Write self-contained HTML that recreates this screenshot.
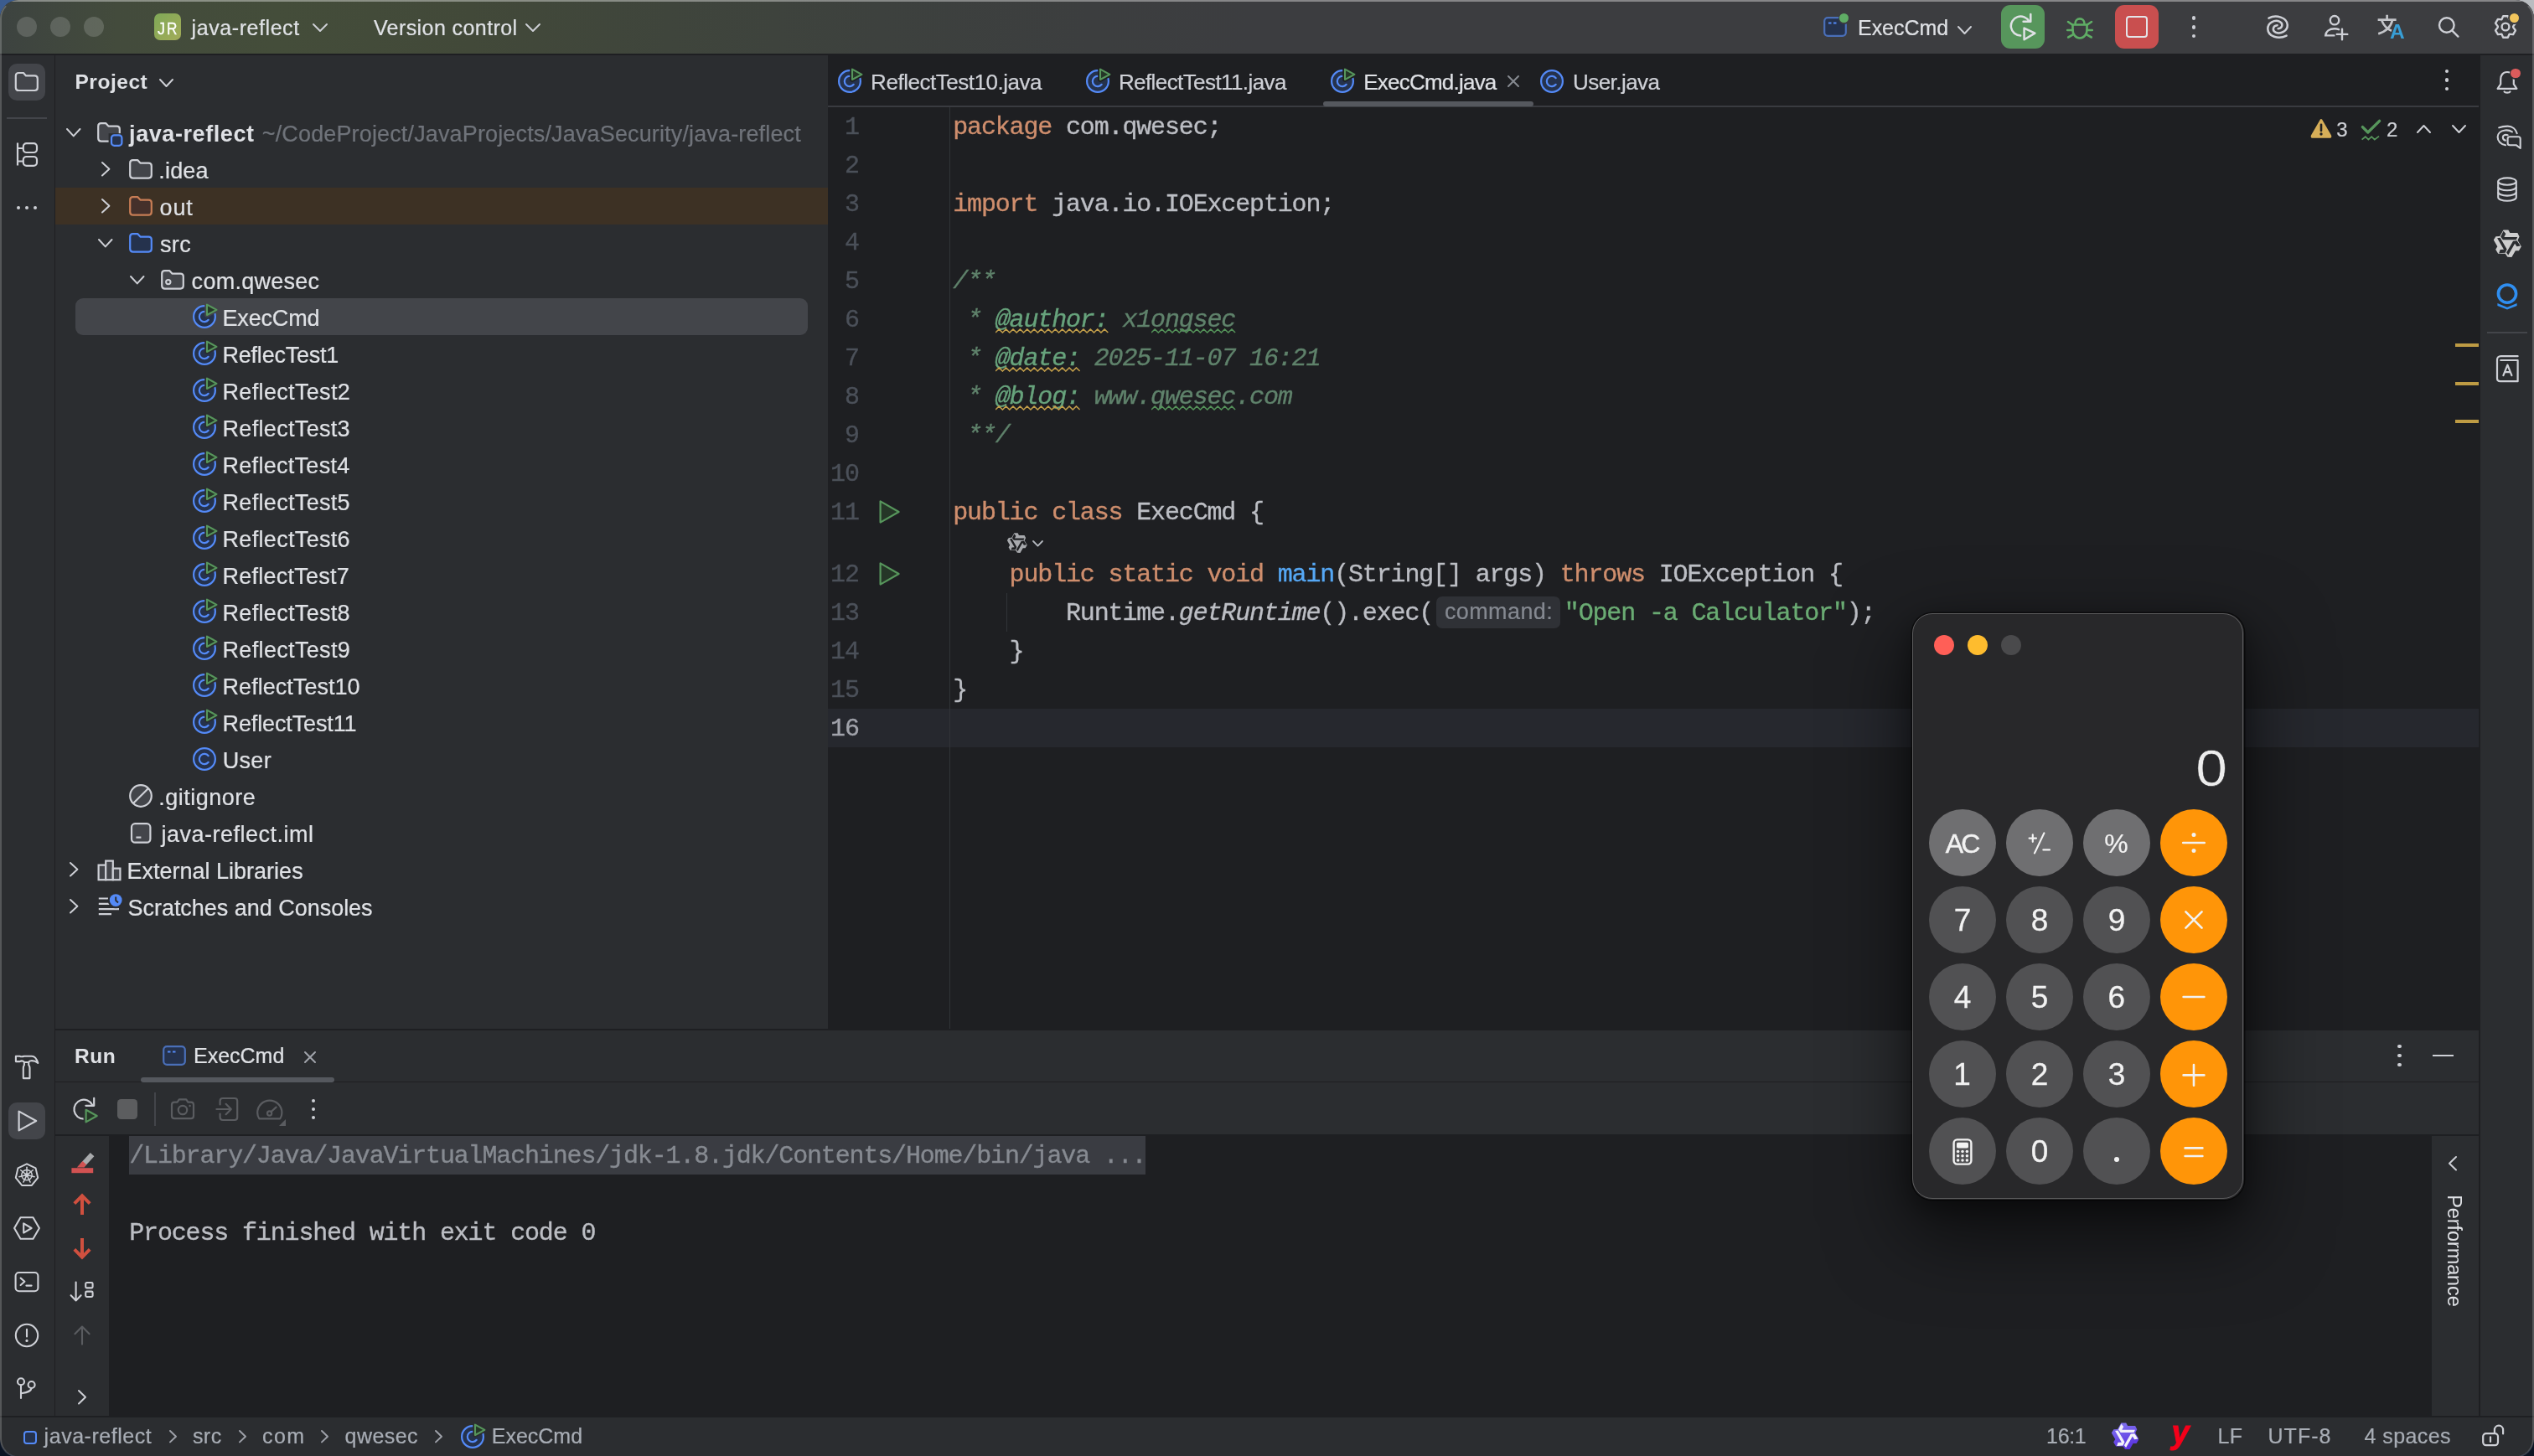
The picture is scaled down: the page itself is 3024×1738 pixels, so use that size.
<!DOCTYPE html>
<html><head><meta charset="utf-8"><title>java-reflect - ExecCmd.java</title>
<style>
html,body{margin:0;padding:0;}
body{width:3024px;height:1738px;overflow:hidden;position:relative;background:#1E1F22;font-family:"Liberation Sans",sans-serif;}
#w div,#w svg,#w span.a{position:absolute;}
#w{will-change:transform;position:absolute;left:0;top:0;width:3024px;height:1738px;overflow:hidden;}
</style></head><body><div id="w">
<div style="left:0px;top:0px;width:60px;height:60px;background:#3b5c8f;"></div>
<div style="left:2964px;top:0px;width:60px;height:60px;background:#b9bcc0;"></div>
<div style="left:0px;top:1678px;width:60px;height:60px;background:#0b1424;"></div>
<div style="left:2964px;top:1678px;width:60px;height:60px;background:#0b1322;"></div>
<div style="left:0;top:0;width:3024px;height:1738px;border-radius:22px;background:#1E1F22;overflow:hidden;" id="win">
<div style="left:0;top:0;width:3024px;height:64px;background:linear-gradient(90deg,#3d4340 0px,#434b3c 140px,#444d3a 330px,#424939 560px,#3f453c 800px,#3d413e 1050px,#3c3e3f 1300px,#3c3d40 1500px,#3c3d40 3024px);"></div>
<div style="left:0px;top:0px;width:3024px;height:2px;background:rgba(255,255,255,0.38);"></div>
<div style="left:0px;top:64px;width:3024px;height:2px;background:#1E1F22;"></div>
<div style="left:0px;top:66px;width:65px;height:1624px;background:#2B2D30;"></div>
<div style="left:66px;top:66px;width:922px;height:1162px;background:#2B2D30;"></div>
<div style="left:2960px;top:66px;width:64px;height:1624px;background:#2B2D30;"></div>
<div style="left:66px;top:1230px;width:2892px;height:61px;background:#2B2D30;"></div>
<div style="left:66px;top:1292px;width:2892px;height:62px;background:#2B2D30;"></div>
<div style="left:66px;top:1355px;width:64px;height:335px;background:#2B2D30;"></div>
<div style="left:2902px;top:1356px;width:56px;height:334px;background:#2B2D30;"></div>
<div style="left:0px;top:1692px;width:3024px;height:46px;background:#2B2D30;"></div>
<div style="left:20px;top:20px;width:24px;height:24px;background:rgba(255,255,255,0.16);border-radius:12px;"></div>
<div style="left:60px;top:20px;width:24px;height:24px;background:rgba(255,255,255,0.16);border-radius:12px;"></div>
<div style="left:100px;top:20px;width:24px;height:24px;background:rgba(255,255,255,0.16);border-radius:12px;"></div>
<div style="left:184px;top:16px;width:32px;height:32px;border-radius:7px;background:linear-gradient(135deg,#7fa857 0%,#a3ac58 100%);"></div>
<div style="left:188.30px;top:21.20px;font-family:'Liberation Sans', sans-serif;font-size:20px;line-height:26px;color:#FFFFFF;white-space:pre;-webkit-text-stroke:0.3px #fff;transform:scaleX(0.9);transform-origin:left center;">J</div>
<div style="left:198.60px;top:21.20px;font-family:'Liberation Sans', sans-serif;font-size:20px;line-height:26px;color:#FFFFFF;white-space:pre;-webkit-text-stroke:0.3px #fff;transform:scaleX(0.86);transform-origin:left center;">R</div>
<div style="left:228.62px;top:16.80px;font-family:'Liberation Sans', sans-serif;font-size:25px;line-height:33px;color:#DFE1E5;white-space:pre;letter-spacing:0.568px;-webkit-text-stroke:0.22px #DFE1E5;">java-reflect</div>
<div style="left:445.88px;top:16.80px;font-family:'Liberation Sans', sans-serif;font-size:25px;line-height:33px;color:#DFE1E5;white-space:pre;letter-spacing:0.420px;-webkit-text-stroke:0.22px #DFE1E5;">Version control</div>
<svg style="left:371.5px;top:26.5px;" width="20" height="12" viewBox="0 0 20 12" fill="none"><path d="M2 2 L10.0 10 L18 2" stroke="#CED0D6" stroke-width="2" stroke-linecap="round" stroke-linejoin="round"/></svg>
<svg style="left:626.0px;top:26.5px;" width="20" height="12" viewBox="0 0 20 12" fill="none"><path d="M2 2 L10.0 10 L18 2" stroke="#CED0D6" stroke-width="2" stroke-linecap="round" stroke-linejoin="round"/></svg>
<svg style="left:2176px;top:20px;" width="28" height="24" viewBox="0 0 28 24" fill="none"><rect x="1.2" y="1.2" width="25.6" height="21.6" rx="4" fill="#25324D" stroke="#4A6FB8" stroke-width="2.2"/><path d="M6 7.5 H9.5 M12 7.5 H15.5" stroke="#548AF7" stroke-width="2"/></svg>
<div style="left:2193.5px;top:14.7px;width:14px;height:14px;background:#3c3d40;border-radius:7px;"></div>
<div style="left:2195px;top:16.2px;width:11px;height:11px;background:#5FAD65;border-radius:5.5px;"></div>
<div style="left:2217.00px;top:17.10px;font-family:'Liberation Sans', sans-serif;font-size:25px;line-height:33px;color:#DFE1E5;white-space:pre;letter-spacing:-0.046px;-webkit-text-stroke:0.22px #DFE1E5;">ExecCmd</div>
<svg style="left:2334.9px;top:30.299999999999997px;" width="19" height="12" viewBox="0 0 19 12" fill="none"><path d="M2 2 L9.5 10 L17 2" stroke="#CED0D6" stroke-width="2" stroke-linecap="round" stroke-linejoin="round"/></svg>
<div style="left:2388px;top:6px;width:52px;height:52px;background:#57965C;border-radius:11px;"></div>
<svg style="left:2398px;top:14px;" width="36" height="36" viewBox="0 0 36 36" fill="none"><path d="M13.4 28.5 A11.5 11.5 0 1 1 23.5 11.6" stroke="#DFE1E5" stroke-width="2.5" stroke-linecap="round"/><path d="M16.6 11.7 H25.3 V2.9" stroke="#DFE1E5" stroke-width="2.5" stroke-linecap="round" stroke-linejoin="round"/><path d="M17.6 19.6 V33.2 L30.4 25.6 Z" stroke="#57965C" stroke-width="6" stroke-linejoin="round" fill="#57965C"/><path d="M17.6 19.6 V33.2 L30.4 25.6 Z" stroke="#DFE1E5" stroke-width="2.5" stroke-linejoin="round" fill="#57965C"/></svg>
<svg style="left:2464px;top:14px;" width="36" height="36" viewBox="0 0 36 36" fill="none"><g stroke="#5FAD65" stroke-width="2.6" stroke-linecap="round" fill="none"><path d="M9.5 15.5 H26.5 V22 A8.5 9.5 0 0 1 9.5 22 Z" stroke-linejoin="round"/><path d="M12.6 13.8 A5.4 5.4 0 0 1 23.4 13.8"/><path d="M4 12 L9 15.5 M32 12 L27 15.5 M3.2 22 H9.5 M32.8 22 H26.5 M4.2 30.5 L10.2 27.2 M31.8 30.5 L25.8 27.2"/></g></svg>
<div style="left:2524px;top:6px;width:52px;height:52px;background:#C94F4F;border-radius:11px;"></div>
<div style="left:2536.5px;top:18.8px;width:22px;height:22px;border:2.6px solid #E4E5E9;border-radius:4px;"></div>
<div style="left:2615.6px;top:19.400000000000002px;width:4.8px;height:4.8px;background:#CED0D6;border-radius:2.4px;"></div>
<div style="left:2615.6px;top:30.0px;width:4.8px;height:4.8px;background:#CED0D6;border-radius:2.4px;"></div>
<div style="left:2615.6px;top:40.6px;width:4.8px;height:4.8px;background:#CED0D6;border-radius:2.4px;"></div>
<svg style="left:2702px;top:16px;" width="32" height="32" viewBox="0 0 32 32" fill="none"><g stroke="#CED0D6" stroke-width="2.5" stroke-linecap="round" fill="none"><path d="M5.5 5.6 C14 1.2 27.5 4.6 27.8 13.8 C28 21 19.5 25.4 13.6 22.6 C9.2 20.4 10.2 14.6 15.6 14.2"/><path d="M26.6 26.6 C17 31.4 4.6 27.6 4.3 18.6 C4 11.2 12.6 7 18.6 9.8 C23 12 22 17.8 16.6 18.2"/></g></svg>
<svg style="left:2770px;top:14px;" width="36" height="36" viewBox="0 0 36 36" fill="none"><g stroke="#CED0D6" stroke-width="2.4" stroke-linecap="round" fill="none"><circle cx="16" cy="10.2" r="5.2"/><path d="M15.4 28.4 H5.2 C5.6 23.4 10 20.3 16 20.3 C17.8 20.3 19.6 20.6 21 21.2"/><path d="M25 20.6 V33.2 M18.7 26.9 H31.3"/></g></svg>
<svg style="left:2834px;top:14px;" width="40" height="36" viewBox="0 0 40 36" fill="none"><g stroke="#C3C5C9" stroke-width="2.7" fill="none"><path d="M3.6 9.6 H25.6 M14.6 3.8 V9.6 M21 10 C19.4 17.6 13 23.6 4.2 26.4 M8.4 10.6 C10.6 16.6 15 20.6 20 22.8"/></g></svg>
<div style="left:2851.99px;top:21.90px;font-family:'Liberation Sans', sans-serif;font-size:24.5px;line-height:32px;color:#389FD6;white-space:pre;font-weight:700;">A</div>
<svg style="left:2906px;top:16px;" width="32" height="32" viewBox="0 0 32 32" fill="none"><g stroke="#CED0D6" stroke-width="2.4" stroke-linecap="round" fill="none"><circle cx="13.8" cy="14" r="8.8"/><path d="M20.4 20.6 L27.4 27.6"/></g></svg>
<svg style="left:2974px;top:16px;" width="32" height="32" viewBox="0 0 32 32" fill="none"><g stroke="#CED0D6" stroke-width="2.4" stroke-linejoin="round" fill="none"><path d="M13.2 3.2 H18.8 L20.6 7.4 L25.1 6.9 L27.9 11.7 L25.2 15.4 V16.6 L27.9 20.3 L25.1 25.1 L20.6 24.6 L18.8 28.8 H13.2 L11.4 24.6 L6.9 25.1 L4.1 20.3 L6.8 16.6 V15.4 L4.1 11.7 L6.9 6.9 L11.4 7.4 Z"/><circle cx="16" cy="16" r="4.4"/></g></svg>
<div style="left:2993.2px;top:14.2px;width:14.4px;height:14.4px;background:#3c3d40;border-radius:7.2px;"></div>
<div style="left:2994.7px;top:15.7px;width:11.4px;height:11.4px;background:#F2C55C;border-radius:5.7px;"></div>
<div style="left:10px;top:76px;width:44px;height:44px;background:#43454A;border-radius:10px;"></div>
<svg style="left:16px;top:84px;" width="32" height="28" viewBox="0 0 32 28" fill="none"><path d="M6.3 3 H12.0 L15.0 6.4 H25.3 Q28.8 6.4 28.8 9.9 V20.5 Q28.8 24 25.3 24 H6.3 Q2.8 24 2.8 20.5 V6.5 Q2.8 3 6.3 3 Z" stroke="#CED0D6" stroke-width="2.2" stroke-linejoin="round"/></svg>
<div style="left:8px;top:140px;width:48px;height:2px;background:#43454A;"></div>
<svg style="left:16px;top:166px;" width="32" height="36" viewBox="0 0 32 36" fill="none"><g stroke="#CED0D6" stroke-width="2.2" fill="none"><path d="M5 4.5 V31.5 M5 11 H11.5 M5 26.5 H11.5"/><rect x="11.8" y="5.2" width="16.2" height="10.8" rx="3.8"/><rect x="11.8" y="21" width="16.2" height="10.8" rx="3.8"/></g></svg>
<div style="left:19.7px;top:245.7px;width:4.6px;height:4.6px;background:#CED0D6;border-radius:2.3px;"></div>
<div style="left:29.7px;top:245.7px;width:4.6px;height:4.6px;background:#CED0D6;border-radius:2.3px;"></div>
<div style="left:39.900000000000006px;top:245.7px;width:4.6px;height:4.6px;background:#CED0D6;border-radius:2.3px;"></div>
<svg style="left:16px;top:1258px;" width="32" height="32" viewBox="0 0 32 32" fill="none"><path d="M2.9 2.7 H7.6 Q9 3.4 10 3.3 Q11.5 3.2 12.9 2.7 H22 C25.5 2.7 28 6.5 29.3 10.9 C27 9 24 8 21.1 8.2 C19.8 8.3 18.8 8.9 18.2 9.8 V13.2 Q19.5 15 19.5 17.1 V29.1 H11.8 V17.1 Q11.8 15 12.9 13.2 V9.8 Q11.4 8.3 10 8.4 Q8.8 8.6 7.6 9.1 H2.9 Z M12.9 10 H18.2" stroke="#CED0D6" stroke-width="2.1" stroke-linejoin="round" fill="none"/></svg>
<div style="left:10px;top:1316px;width:44px;height:44px;background:#43454A;border-radius:10px;"></div>
<svg style="left:16px;top:1322px;" width="32" height="32" viewBox="0 0 32 32" fill="none"><path d="M6.6 4.6 V27.4 L27.2 16 Z" stroke="#CED0D6" stroke-width="2.2" stroke-linejoin="round"/></svg>
<svg style="left:16px;top:1386px;" width="32" height="32" viewBox="0 0 32 32" fill="none"><g stroke="#CED0D6" stroke-linejoin="round" fill="none"><polygon points="16.00,3.30 26.55,8.38 29.16,19.80 21.86,28.96 10.14,28.96 2.84,19.80 5.45,8.38" stroke-width="2"/><g stroke-width="1.5" stroke-linecap="round"><circle cx="16" cy="16.6" r="6.2"/><circle cx="16" cy="16.6" r="1.6"/><path d="M16 16.6 L16.00 7.20"/><path d="M16 16.6 L23.35 10.74"/><path d="M16 16.6 L25.16 18.69"/><path d="M16 16.6 L20.08 25.07"/><path d="M16 16.6 L11.92 25.07"/><path d="M16 16.6 L6.84 18.69"/><path d="M16 16.6 L8.65 10.74"/></g></g></svg>
<svg style="left:14px;top:1450px;" width="36" height="32" viewBox="0 0 36 32" fill="none"><g stroke="#CED0D6" stroke-width="2.1" stroke-linejoin="round" fill="none"><polygon points="3.1,16 10.5,3.3 25.5,3.3 32.9,16 25.5,28.7 10.5,28.7"/><path d="M14.2 10.4 V21.6 L23.6 16 Z"/></g></svg>
<svg style="left:16px;top:1514px;" width="32" height="32" viewBox="0 0 32 32" fill="none"><g stroke="#CED0D6" stroke-width="2.1" stroke-linejoin="round" stroke-linecap="round" fill="none"><rect x="2.6" y="5" width="26.8" height="22.2" rx="4"/><path d="M8.6 11.6 L13.4 15.8 L8.6 20 M15.4 20.6 H21.6"/></g></svg>
<svg style="left:16px;top:1578px;" width="32" height="32" viewBox="0 0 32 32" fill="none"><g stroke="#CED0D6" stroke-width="2.1" stroke-linecap="round" fill="none"><circle cx="16" cy="16" r="13.2"/><path d="M16 8.8 V17.4"/></g><circle cx="16" cy="22.4" r="1.6" fill="#CED0D6"/></svg>
<svg style="left:16px;top:1642px;" width="32" height="32" viewBox="0 0 32 32" fill="none"><g stroke="#CED0D6" stroke-width="2.1" stroke-linecap="round" fill="none"><circle cx="9" cy="7.2" r="4"/><circle cx="21.6" cy="11" r="4"/><path d="M9 11.4 V27 M21.4 15.2 C21 19.6 15 20.2 9.2 21.2"/></g></svg>
<div style="left:89.41px;top:81.60px;font-family:'Liberation Sans', sans-serif;font-size:24.5px;line-height:32px;color:#DFE1E5;white-space:pre;letter-spacing:0.551px;font-weight:700;">Project</div>
<svg style="left:188.5px;top:92.6px;" width="19" height="12" viewBox="0 0 19 12" fill="none"><path d="M2 2 L9.5 10 L17 2" stroke="#CED0D6" stroke-width="2" stroke-linecap="round" stroke-linejoin="round"/></svg>
<div style="left:66px;top:224px;width:922px;height:44px;background:#3D3124;"></div>
<div style="left:90px;top:356px;width:874px;height:44px;background:#43454A;border-radius:9px;"></div>
<svg style="left:78.25px;top:152.20000000000002px;" width="19.5" height="12.4" viewBox="0 0 19.5 12.4" fill="none"><path d="M2 2 L9.75 10.4 L17.5 2" stroke="#CED0D6" stroke-width="2" stroke-linecap="round" stroke-linejoin="round"/></svg>
<svg style="left:115px;top:144px;" width="34" height="32" viewBox="0 0 34 32" fill="none"><path d="M5.7 3.2 H11.399999999999999 L14.399999999999999 6.6 H24.3 Q27.8 6.6 27.8 10.100000000000001 V21.099999999999998 Q27.8 24.599999999999998 24.3 24.599999999999998 H5.7 Q2.2 24.599999999999998 2.2 21.099999999999998 V6.7 Q2.2 3.2 5.7 3.2 Z" stroke="#CED0D6" stroke-width="2.2" stroke-linejoin="round" fill="#43454A"/><rect x="14.6" y="15.2" width="19" height="16.8" fill="#2B2D30"/><rect x="18" y="17.4" width="12.4" height="12.4" rx="3.4" fill="#25324D" stroke="#548AF7" stroke-width="2.2"/></svg>
<div style="left:154.10px;top:141.80px;font-family:'Liberation Sans', sans-serif;font-size:27px;line-height:36px;color:#DFE1E5;white-space:pre;letter-spacing:0.573px;font-weight:700;">java-reflect</div>
<div style="left:312.79px;top:141.80px;font-family:'Liberation Sans', sans-serif;font-size:27px;line-height:36px;color:#6F737A;white-space:pre;letter-spacing:0.145px;-webkit-text-stroke:0.22px #6F737A;">~/CodeProject/JavaProjects/JavaSecurity/java-reflect</div>
<svg style="left:119.6px;top:192.25px;" width="12.4" height="19.5" viewBox="0 0 12.4 19.5" fill="none"><path d="M2 2 L10.4 9.75 L2 17.5" stroke="#CED0D6" stroke-width="2" stroke-linecap="round" stroke-linejoin="round"/></svg>
<svg style="left:153px;top:188px;" width="32" height="28" viewBox="0 0 32 28" fill="none"><path d="M5.7 3.2 H11.399999999999999 L14.399999999999999 6.6 H24.3 Q27.8 6.6 27.8 10.100000000000001 V21.099999999999998 Q27.8 24.599999999999998 24.3 24.599999999999998 H5.7 Q2.2 24.599999999999998 2.2 21.099999999999998 V6.7 Q2.2 3.2 5.7 3.2 Z" stroke="#CED0D6" stroke-width="2.2" stroke-linejoin="round" fill="#43454A"/></svg>
<div style="left:189.27px;top:185.80px;font-family:'Liberation Sans', sans-serif;font-size:27px;line-height:36px;color:#DFE1E5;white-space:pre;letter-spacing:0.185px;-webkit-text-stroke:0.22px #DFE1E5;">.idea</div>
<svg style="left:119.6px;top:236.25px;" width="12.4" height="19.5" viewBox="0 0 12.4 19.5" fill="none"><path d="M2 2 L10.4 9.75 L2 17.5" stroke="#CED0D6" stroke-width="2" stroke-linecap="round" stroke-linejoin="round"/></svg>
<svg style="left:153px;top:232px;" width="32" height="28" viewBox="0 0 32 28" fill="none"><path d="M5.7 3.2 H11.399999999999999 L14.399999999999999 6.6 H24.3 Q27.8 6.6 27.8 10.100000000000001 V21.099999999999998 Q27.8 24.599999999999998 24.3 24.599999999999998 H5.7 Q2.2 24.599999999999998 2.2 21.099999999999998 V6.7 Q2.2 3.2 5.7 3.2 Z" stroke="#C77D55" stroke-width="2.2" stroke-linejoin="round" fill="#45302B"/></svg>
<div style="left:190.62px;top:229.80px;font-family:'Liberation Sans', sans-serif;font-size:27px;line-height:36px;color:#DFE1E5;white-space:pre;letter-spacing:0.860px;-webkit-text-stroke:0.22px #DFE1E5;">out</div>
<svg style="left:116.25px;top:284.2px;" width="19.5" height="12.4" viewBox="0 0 19.5 12.4" fill="none"><path d="M2 2 L9.75 10.4 L17.5 2" stroke="#CED0D6" stroke-width="2" stroke-linecap="round" stroke-linejoin="round"/></svg>
<svg style="left:153px;top:276px;" width="32" height="28" viewBox="0 0 32 28" fill="none"><path d="M5.7 3.2 H11.399999999999999 L14.399999999999999 6.6 H24.3 Q27.8 6.6 27.8 10.100000000000001 V21.099999999999998 Q27.8 24.599999999999998 24.3 24.599999999999998 H5.7 Q2.2 24.599999999999998 2.2 21.099999999999998 V6.7 Q2.2 3.2 5.7 3.2 Z" stroke="#548AF7" stroke-width="2.2" stroke-linejoin="round" fill="#25324D"/></svg>
<div style="left:191.02px;top:273.80px;font-family:'Liberation Sans', sans-serif;font-size:27px;line-height:36px;color:#DFE1E5;white-space:pre;letter-spacing:0.352px;-webkit-text-stroke:0.22px #DFE1E5;">src</div>
<svg style="left:154.25px;top:328.2px;" width="19.5" height="12.4" viewBox="0 0 19.5 12.4" fill="none"><path d="M2 2 L9.75 10.4 L17.5 2" stroke="#CED0D6" stroke-width="2" stroke-linecap="round" stroke-linejoin="round"/></svg>
<svg style="left:191px;top:320px;" width="32" height="28" viewBox="0 0 32 28" fill="none"><path d="M5.7 3.2 H11.399999999999999 L14.399999999999999 6.6 H24.3 Q27.8 6.6 27.8 10.100000000000001 V21.099999999999998 Q27.8 24.599999999999998 24.3 24.599999999999998 H5.7 Q2.2 24.599999999999998 2.2 21.099999999999998 V6.7 Q2.2 3.2 5.7 3.2 Z" stroke="#CED0D6" stroke-width="2.2" stroke-linejoin="round" fill="#43454A"/><circle cx="9.8" cy="16.6" r="2.7" stroke="#CED0D6" stroke-width="2"/></svg>
<div style="left:228.62px;top:317.80px;font-family:'Liberation Sans', sans-serif;font-size:27px;line-height:36px;color:#DFE1E5;white-space:pre;letter-spacing:0.271px;-webkit-text-stroke:0.22px #DFE1E5;">com.qwesec</div>
<svg style="left:228.0px;top:360.0px;" width="36.0" height="36.0" viewBox="0 0 36 36" fill="none"><circle cx="16" cy="18" r="12.9" fill="#25324D" stroke="#548AF7" stroke-width="2.2"/><path d="M20.7 14.2 A6.1 6.1 0 1 0 20.7 21.8" stroke="#548AF7" stroke-width="2.2" stroke-linecap="round" fill="none"/><path d="M19 3.6 V16 L30.4 9.8 Z" stroke="#43454A" stroke-width="5.6" stroke-linejoin="round" fill="#43454A"/><path d="M19 3.6 V16 L30.4 9.8 Z" stroke="#57965C" stroke-width="2.1" stroke-linejoin="round" fill="#253627"/></svg>
<div style="left:265.54px;top:361.80px;font-family:'Liberation Sans', sans-serif;font-size:27px;line-height:36px;color:#DFE1E5;white-space:pre;letter-spacing:-0.177px;-webkit-text-stroke:0.22px #DFE1E5;">ExecCmd</div>
<svg style="left:228.0px;top:404.0px;" width="36.0" height="36.0" viewBox="0 0 36 36" fill="none"><circle cx="16" cy="18" r="12.9" fill="#25324D" stroke="#548AF7" stroke-width="2.2"/><path d="M20.7 14.2 A6.1 6.1 0 1 0 20.7 21.8" stroke="#548AF7" stroke-width="2.2" stroke-linecap="round" fill="none"/><path d="M19 3.6 V16 L30.4 9.8 Z" stroke="#2B2D30" stroke-width="5.6" stroke-linejoin="round" fill="#2B2D30"/><path d="M19 3.6 V16 L30.4 9.8 Z" stroke="#57965C" stroke-width="2.1" stroke-linejoin="round" fill="#253627"/></svg>
<div style="left:265.54px;top:405.80px;font-family:'Liberation Sans', sans-serif;font-size:27px;line-height:36px;color:#DFE1E5;white-space:pre;letter-spacing:-0.230px;-webkit-text-stroke:0.22px #DFE1E5;">ReflecTest1</div>
<svg style="left:228.0px;top:448.0px;" width="36.0" height="36.0" viewBox="0 0 36 36" fill="none"><circle cx="16" cy="18" r="12.9" fill="#25324D" stroke="#548AF7" stroke-width="2.2"/><path d="M20.7 14.2 A6.1 6.1 0 1 0 20.7 21.8" stroke="#548AF7" stroke-width="2.2" stroke-linecap="round" fill="none"/><path d="M19 3.6 V16 L30.4 9.8 Z" stroke="#2B2D30" stroke-width="5.6" stroke-linejoin="round" fill="#2B2D30"/><path d="M19 3.6 V16 L30.4 9.8 Z" stroke="#57965C" stroke-width="2.1" stroke-linejoin="round" fill="#253627"/></svg>
<div style="left:265.54px;top:449.80px;font-family:'Liberation Sans', sans-serif;font-size:27px;line-height:36px;color:#DFE1E5;white-space:pre;letter-spacing:0.334px;-webkit-text-stroke:0.22px #DFE1E5;">ReflectTest2</div>
<svg style="left:228.0px;top:492.0px;" width="36.0" height="36.0" viewBox="0 0 36 36" fill="none"><circle cx="16" cy="18" r="12.9" fill="#25324D" stroke="#548AF7" stroke-width="2.2"/><path d="M20.7 14.2 A6.1 6.1 0 1 0 20.7 21.8" stroke="#548AF7" stroke-width="2.2" stroke-linecap="round" fill="none"/><path d="M19 3.6 V16 L30.4 9.8 Z" stroke="#2B2D30" stroke-width="5.6" stroke-linejoin="round" fill="#2B2D30"/><path d="M19 3.6 V16 L30.4 9.8 Z" stroke="#57965C" stroke-width="2.1" stroke-linejoin="round" fill="#253627"/></svg>
<div style="left:265.54px;top:493.80px;font-family:'Liberation Sans', sans-serif;font-size:27px;line-height:36px;color:#DFE1E5;white-space:pre;letter-spacing:0.322px;-webkit-text-stroke:0.22px #DFE1E5;">ReflectTest3</div>
<svg style="left:228.0px;top:536.0px;" width="36.0" height="36.0" viewBox="0 0 36 36" fill="none"><circle cx="16" cy="18" r="12.9" fill="#25324D" stroke="#548AF7" stroke-width="2.2"/><path d="M20.7 14.2 A6.1 6.1 0 1 0 20.7 21.8" stroke="#548AF7" stroke-width="2.2" stroke-linecap="round" fill="none"/><path d="M19 3.6 V16 L30.4 9.8 Z" stroke="#2B2D30" stroke-width="5.6" stroke-linejoin="round" fill="#2B2D30"/><path d="M19 3.6 V16 L30.4 9.8 Z" stroke="#57965C" stroke-width="2.1" stroke-linejoin="round" fill="#253627"/></svg>
<div style="left:265.54px;top:537.80px;font-family:'Liberation Sans', sans-serif;font-size:27px;line-height:36px;color:#DFE1E5;white-space:pre;letter-spacing:0.285px;-webkit-text-stroke:0.22px #DFE1E5;">ReflectTest4</div>
<svg style="left:228.0px;top:580.0px;" width="36.0" height="36.0" viewBox="0 0 36 36" fill="none"><circle cx="16" cy="18" r="12.9" fill="#25324D" stroke="#548AF7" stroke-width="2.2"/><path d="M20.7 14.2 A6.1 6.1 0 1 0 20.7 21.8" stroke="#548AF7" stroke-width="2.2" stroke-linecap="round" fill="none"/><path d="M19 3.6 V16 L30.4 9.8 Z" stroke="#2B2D30" stroke-width="5.6" stroke-linejoin="round" fill="#2B2D30"/><path d="M19 3.6 V16 L30.4 9.8 Z" stroke="#57965C" stroke-width="2.1" stroke-linejoin="round" fill="#253627"/></svg>
<div style="left:265.54px;top:581.80px;font-family:'Liberation Sans', sans-serif;font-size:27px;line-height:36px;color:#DFE1E5;white-space:pre;letter-spacing:0.322px;-webkit-text-stroke:0.22px #DFE1E5;">ReflectTest5</div>
<svg style="left:228.0px;top:624.0px;" width="36.0" height="36.0" viewBox="0 0 36 36" fill="none"><circle cx="16" cy="18" r="12.9" fill="#25324D" stroke="#548AF7" stroke-width="2.2"/><path d="M20.7 14.2 A6.1 6.1 0 1 0 20.7 21.8" stroke="#548AF7" stroke-width="2.2" stroke-linecap="round" fill="none"/><path d="M19 3.6 V16 L30.4 9.8 Z" stroke="#2B2D30" stroke-width="5.6" stroke-linejoin="round" fill="#2B2D30"/><path d="M19 3.6 V16 L30.4 9.8 Z" stroke="#57965C" stroke-width="2.1" stroke-linejoin="round" fill="#253627"/></svg>
<div style="left:265.54px;top:625.80px;font-family:'Liberation Sans', sans-serif;font-size:27px;line-height:36px;color:#DFE1E5;white-space:pre;letter-spacing:0.322px;-webkit-text-stroke:0.22px #DFE1E5;">ReflectTest6</div>
<svg style="left:228.0px;top:668.0px;" width="36.0" height="36.0" viewBox="0 0 36 36" fill="none"><circle cx="16" cy="18" r="12.9" fill="#25324D" stroke="#548AF7" stroke-width="2.2"/><path d="M20.7 14.2 A6.1 6.1 0 1 0 20.7 21.8" stroke="#548AF7" stroke-width="2.2" stroke-linecap="round" fill="none"/><path d="M19 3.6 V16 L30.4 9.8 Z" stroke="#2B2D30" stroke-width="5.6" stroke-linejoin="round" fill="#2B2D30"/><path d="M19 3.6 V16 L30.4 9.8 Z" stroke="#57965C" stroke-width="2.1" stroke-linejoin="round" fill="#253627"/></svg>
<div style="left:265.54px;top:669.80px;font-family:'Liberation Sans', sans-serif;font-size:27px;line-height:36px;color:#DFE1E5;white-space:pre;letter-spacing:0.243px;-webkit-text-stroke:0.22px #DFE1E5;">ReflectTest7</div>
<svg style="left:228.0px;top:712.0px;" width="36.0" height="36.0" viewBox="0 0 36 36" fill="none"><circle cx="16" cy="18" r="12.9" fill="#25324D" stroke="#548AF7" stroke-width="2.2"/><path d="M20.7 14.2 A6.1 6.1 0 1 0 20.7 21.8" stroke="#548AF7" stroke-width="2.2" stroke-linecap="round" fill="none"/><path d="M19 3.6 V16 L30.4 9.8 Z" stroke="#2B2D30" stroke-width="5.6" stroke-linejoin="round" fill="#2B2D30"/><path d="M19 3.6 V16 L30.4 9.8 Z" stroke="#57965C" stroke-width="2.1" stroke-linejoin="round" fill="#253627"/></svg>
<div style="left:265.54px;top:713.80px;font-family:'Liberation Sans', sans-serif;font-size:27px;line-height:36px;color:#DFE1E5;white-space:pre;letter-spacing:0.322px;-webkit-text-stroke:0.22px #DFE1E5;">ReflectTest8</div>
<svg style="left:228.0px;top:756.0px;" width="36.0" height="36.0" viewBox="0 0 36 36" fill="none"><circle cx="16" cy="18" r="12.9" fill="#25324D" stroke="#548AF7" stroke-width="2.2"/><path d="M20.7 14.2 A6.1 6.1 0 1 0 20.7 21.8" stroke="#548AF7" stroke-width="2.2" stroke-linecap="round" fill="none"/><path d="M19 3.6 V16 L30.4 9.8 Z" stroke="#2B2D30" stroke-width="5.6" stroke-linejoin="round" fill="#2B2D30"/><path d="M19 3.6 V16 L30.4 9.8 Z" stroke="#57965C" stroke-width="2.1" stroke-linejoin="round" fill="#253627"/></svg>
<div style="left:265.54px;top:757.80px;font-family:'Liberation Sans', sans-serif;font-size:27px;line-height:36px;color:#DFE1E5;white-space:pre;letter-spacing:0.334px;-webkit-text-stroke:0.22px #DFE1E5;">ReflectTest9</div>
<svg style="left:228.0px;top:800.0px;" width="36.0" height="36.0" viewBox="0 0 36 36" fill="none"><circle cx="16" cy="18" r="12.9" fill="#25324D" stroke="#548AF7" stroke-width="2.2"/><path d="M20.7 14.2 A6.1 6.1 0 1 0 20.7 21.8" stroke="#548AF7" stroke-width="2.2" stroke-linecap="round" fill="none"/><path d="M19 3.6 V16 L30.4 9.8 Z" stroke="#2B2D30" stroke-width="5.6" stroke-linejoin="round" fill="#2B2D30"/><path d="M19 3.6 V16 L30.4 9.8 Z" stroke="#57965C" stroke-width="2.1" stroke-linejoin="round" fill="#253627"/></svg>
<div style="left:265.54px;top:801.80px;font-family:'Liberation Sans', sans-serif;font-size:27px;line-height:36px;color:#DFE1E5;white-space:pre;letter-spacing:0.040px;-webkit-text-stroke:0.22px #DFE1E5;">ReflectTest10</div>
<svg style="left:228.0px;top:844.0px;" width="36.0" height="36.0" viewBox="0 0 36 36" fill="none"><circle cx="16" cy="18" r="12.9" fill="#25324D" stroke="#548AF7" stroke-width="2.2"/><path d="M20.7 14.2 A6.1 6.1 0 1 0 20.7 21.8" stroke="#548AF7" stroke-width="2.2" stroke-linecap="round" fill="none"/><path d="M19 3.6 V16 L30.4 9.8 Z" stroke="#2B2D30" stroke-width="5.6" stroke-linejoin="round" fill="#2B2D30"/><path d="M19 3.6 V16 L30.4 9.8 Z" stroke="#57965C" stroke-width="2.1" stroke-linejoin="round" fill="#253627"/></svg>
<div style="left:265.54px;top:845.80px;font-family:'Liberation Sans', sans-serif;font-size:27px;line-height:36px;color:#DFE1E5;white-space:pre;letter-spacing:-0.127px;-webkit-text-stroke:0.22px #DFE1E5;">ReflectTest11</div>
<svg style="left:228.0px;top:888.0px;" width="36.0" height="36.0" viewBox="0 0 36 36" fill="none"><circle cx="16" cy="18" r="12.9" fill="#25324D" stroke="#548AF7" stroke-width="2.2"/><path d="M20.7 14.2 A6.1 6.1 0 1 0 20.7 21.8" stroke="#548AF7" stroke-width="2.2" stroke-linecap="round" fill="none"/></svg>
<div style="left:265.68px;top:889.80px;font-family:'Liberation Sans', sans-serif;font-size:27px;line-height:36px;color:#DFE1E5;white-space:pre;letter-spacing:0.342px;-webkit-text-stroke:0.22px #DFE1E5;">User</div>
<svg style="left:153px;top:935px;" width="30" height="30" viewBox="0 0 30 30" fill="none"><circle cx="15" cy="15" r="12.8" fill="#43454A" stroke="#CED0D6" stroke-width="2.2"/><path d="M6.2 23.8 L23.8 6.2" stroke="#CED0D6" stroke-width="2.2"/></svg>
<div style="left:189.27px;top:933.80px;font-family:'Liberation Sans', sans-serif;font-size:27px;line-height:36px;color:#DFE1E5;white-space:pre;letter-spacing:0.489px;-webkit-text-stroke:0.22px #DFE1E5;">.gitignore</div>
<svg style="left:153px;top:979px;" width="30" height="30" viewBox="0 0 30 30" fill="none"><rect x="4" y="4.2" width="22.4" height="22.4" rx="4.2" fill="#43454A" stroke="#CED0D6" stroke-width="2.2"/><path d="M9.4 20.6 H15.4" stroke="#CED0D6" stroke-width="2.2"/></svg>
<div style="left:192.38px;top:977.80px;font-family:'Liberation Sans', sans-serif;font-size:27px;line-height:36px;color:#DFE1E5;white-space:pre;letter-spacing:0.511px;-webkit-text-stroke:0.22px #DFE1E5;">java-reflect.iml</div>
<svg style="left:81.6px;top:1028.25px;" width="12.4" height="19.5" viewBox="0 0 12.4 19.5" fill="none"><path d="M2 2 L10.4 9.75 L2 17.5" stroke="#CED0D6" stroke-width="2" stroke-linecap="round" stroke-linejoin="round"/></svg>
<svg style="left:115px;top:1023px;" width="32" height="30" viewBox="0 0 32 30" fill="none"><g stroke="#CED0D6" stroke-width="2.2" fill="#43454A"><rect x="2.6" y="9.6" width="8.6" height="17.6"/><rect x="11.2" y="4.6" width="8.6" height="22.6"/><rect x="19.8" y="13.6" width="8.6" height="13.6"/></g></svg>
<div style="left:151.54px;top:1021.80px;font-family:'Liberation Sans', sans-serif;font-size:27px;line-height:36px;color:#DFE1E5;white-space:pre;-webkit-text-stroke:0.22px #DFE1E5;">External Libraries</div>
<svg style="left:81.6px;top:1072.25px;" width="12.4" height="19.5" viewBox="0 0 12.4 19.5" fill="none"><path d="M2 2 L10.4 9.75 L2 17.5" stroke="#CED0D6" stroke-width="2" stroke-linecap="round" stroke-linejoin="round"/></svg>
<svg style="left:115px;top:1064px;" width="34" height="36" viewBox="0 0 34 36" fill="none"><g stroke="#CED0D6" stroke-width="2.2"><path d="M2.8 8.5 H14.4 M2.8 14.8 H27 M2.8 21.1 H27 M2.8 27.2 H18"/></g><circle cx="23.2" cy="10.6" r="9.6" fill="#2B2D30"/><circle cx="23.2" cy="10.6" r="7.4" fill="#548AF7"/><path d="M23.2 6.4 V10.8 L26 13.4" stroke="#2B2D30" stroke-width="2" fill="none"/></svg>
<div style="left:152.48px;top:1065.80px;font-family:'Liberation Sans', sans-serif;font-size:27px;line-height:36px;color:#DFE1E5;white-space:pre;letter-spacing:-0.025px;-webkit-text-stroke:0.22px #DFE1E5;">Scratches and Consoles</div>
<div style="left:988px;top:126px;width:1971px;height:2px;background:#393B40;"></div>
<svg style="left:998.0px;top:79.0px;" width="36.0" height="36.0" viewBox="0 0 36 36" fill="none"><circle cx="16" cy="18" r="12.9" fill="#25324D" stroke="#548AF7" stroke-width="2.2"/><path d="M20.7 14.2 A6.1 6.1 0 1 0 20.7 21.8" stroke="#548AF7" stroke-width="2.2" stroke-linecap="round" fill="none"/><path d="M19 3.6 V16 L30.4 9.8 Z" stroke="#1E1F22" stroke-width="5.6" stroke-linejoin="round" fill="#1E1F22"/><path d="M19 3.6 V16 L30.4 9.8 Z" stroke="#57965C" stroke-width="2.1" stroke-linejoin="round" fill="#253627"/></svg>
<div style="left:1039.12px;top:81.10px;font-family:'Liberation Sans', sans-serif;font-size:26px;line-height:34px;color:#CED0D6;white-space:pre;letter-spacing:-0.469px;-webkit-text-stroke:0.22px #CED0D6;">ReflectTest10.java</div>
<svg style="left:1294.0px;top:79.0px;" width="36.0" height="36.0" viewBox="0 0 36 36" fill="none"><circle cx="16" cy="18" r="12.9" fill="#25324D" stroke="#548AF7" stroke-width="2.2"/><path d="M20.7 14.2 A6.1 6.1 0 1 0 20.7 21.8" stroke="#548AF7" stroke-width="2.2" stroke-linecap="round" fill="none"/><path d="M19 3.6 V16 L30.4 9.8 Z" stroke="#1E1F22" stroke-width="5.6" stroke-linejoin="round" fill="#1E1F22"/><path d="M19 3.6 V16 L30.4 9.8 Z" stroke="#57965C" stroke-width="2.1" stroke-linejoin="round" fill="#253627"/></svg>
<div style="left:1334.92px;top:81.10px;font-family:'Liberation Sans', sans-serif;font-size:26px;line-height:34px;color:#CED0D6;white-space:pre;letter-spacing:-0.589px;-webkit-text-stroke:0.22px #CED0D6;">ReflectTest11.java</div>
<svg style="left:1586.0px;top:79.0px;" width="36.0" height="36.0" viewBox="0 0 36 36" fill="none"><circle cx="16" cy="18" r="12.9" fill="#25324D" stroke="#548AF7" stroke-width="2.2"/><path d="M20.7 14.2 A6.1 6.1 0 1 0 20.7 21.8" stroke="#548AF7" stroke-width="2.2" stroke-linecap="round" fill="none"/><path d="M19 3.6 V16 L30.4 9.8 Z" stroke="#1E1F22" stroke-width="5.6" stroke-linejoin="round" fill="#1E1F22"/><path d="M19 3.6 V16 L30.4 9.8 Z" stroke="#57965C" stroke-width="2.1" stroke-linejoin="round" fill="#253627"/></svg>
<div style="left:1627.32px;top:81.10px;font-family:'Liberation Sans', sans-serif;font-size:26px;line-height:34px;color:#DFE1E5;white-space:pre;letter-spacing:-0.784px;-webkit-text-stroke:0.22px #DFE1E5;">ExecCmd.java</div>
<svg style="left:1835.8px;top:79.0px;" width="36.0" height="36.0" viewBox="0 0 36 36" fill="none"><circle cx="16" cy="18" r="12.9" fill="#25324D" stroke="#548AF7" stroke-width="2.2"/><path d="M20.7 14.2 A6.1 6.1 0 1 0 20.7 21.8" stroke="#548AF7" stroke-width="2.2" stroke-linecap="round" fill="none"/></svg>
<div style="left:1877.05px;top:81.10px;font-family:'Liberation Sans', sans-serif;font-size:26px;line-height:34px;color:#CED0D6;white-space:pre;letter-spacing:-0.559px;-webkit-text-stroke:0.22px #CED0D6;">User.java</div>
<svg style="left:1797px;top:88px;" width="18" height="18" viewBox="0 0 18 18" fill="none"><path d="M3 3 L15 15 M15 3 L3 15" stroke="#868A91" stroke-width="2" stroke-linecap="round"/></svg>
<div style="left:1578.6px;top:121px;width:251px;height:6px;background:#55585E;border-radius:3px;"></div>
<div style="left:2917.6px;top:82.7px;width:4.6px;height:4.6px;background:#CED0D6;border-radius:2.3px;"></div>
<div style="left:2917.6px;top:93.3px;width:4.6px;height:4.6px;background:#CED0D6;border-radius:2.3px;"></div>
<div style="left:2917.6px;top:103.9px;width:4.6px;height:4.6px;background:#CED0D6;border-radius:2.3px;"></div>
<div style="left:988px;top:846px;width:1971px;height:46px;background:#26282E;"></div>
<div style="left:1132.6px;top:128px;width:1.6px;height:1100px;background:#313438;"></div>
<div style="left:1007.95px;top:129.00px;font-family:'Liberation Mono',monospace;font-size:30px;line-height:46px;letter-spacing:-1.153px;white-space:pre;"><span style="color:#4B5059;-webkit-text-stroke:0.35px #4B5059;">1</span></div>
<div style="left:1007.95px;top:175.00px;font-family:'Liberation Mono',monospace;font-size:30px;line-height:46px;letter-spacing:-1.153px;white-space:pre;"><span style="color:#4B5059;-webkit-text-stroke:0.35px #4B5059;">2</span></div>
<div style="left:1007.95px;top:221.00px;font-family:'Liberation Mono',monospace;font-size:30px;line-height:46px;letter-spacing:-1.153px;white-space:pre;"><span style="color:#4B5059;-webkit-text-stroke:0.35px #4B5059;">3</span></div>
<div style="left:1007.95px;top:267.00px;font-family:'Liberation Mono',monospace;font-size:30px;line-height:46px;letter-spacing:-1.153px;white-space:pre;"><span style="color:#4B5059;-webkit-text-stroke:0.35px #4B5059;">4</span></div>
<div style="left:1007.95px;top:313.00px;font-family:'Liberation Mono',monospace;font-size:30px;line-height:46px;letter-spacing:-1.153px;white-space:pre;"><span style="color:#4B5059;-webkit-text-stroke:0.35px #4B5059;">5</span></div>
<div style="left:1007.95px;top:359.00px;font-family:'Liberation Mono',monospace;font-size:30px;line-height:46px;letter-spacing:-1.153px;white-space:pre;"><span style="color:#4B5059;-webkit-text-stroke:0.35px #4B5059;">6</span></div>
<div style="left:1007.95px;top:405.00px;font-family:'Liberation Mono',monospace;font-size:30px;line-height:46px;letter-spacing:-1.153px;white-space:pre;"><span style="color:#4B5059;-webkit-text-stroke:0.35px #4B5059;">7</span></div>
<div style="left:1007.95px;top:451.00px;font-family:'Liberation Mono',monospace;font-size:30px;line-height:46px;letter-spacing:-1.153px;white-space:pre;"><span style="color:#4B5059;-webkit-text-stroke:0.35px #4B5059;">8</span></div>
<div style="left:1007.95px;top:497.00px;font-family:'Liberation Mono',monospace;font-size:30px;line-height:46px;letter-spacing:-1.153px;white-space:pre;"><span style="color:#4B5059;-webkit-text-stroke:0.35px #4B5059;">9</span></div>
<div style="left:991.10px;top:543.00px;font-family:'Liberation Mono',monospace;font-size:30px;line-height:46px;letter-spacing:-1.153px;white-space:pre;"><span style="color:#4B5059;-webkit-text-stroke:0.35px #4B5059;">10</span></div>
<div style="left:991.10px;top:589.00px;font-family:'Liberation Mono',monospace;font-size:30px;line-height:46px;letter-spacing:-1.153px;white-space:pre;"><span style="color:#4B5059;-webkit-text-stroke:0.35px #4B5059;">11</span></div>
<div style="left:991.10px;top:663.00px;font-family:'Liberation Mono',monospace;font-size:30px;line-height:46px;letter-spacing:-1.153px;white-space:pre;"><span style="color:#4B5059;-webkit-text-stroke:0.35px #4B5059;">12</span></div>
<div style="left:991.10px;top:709.00px;font-family:'Liberation Mono',monospace;font-size:30px;line-height:46px;letter-spacing:-1.153px;white-space:pre;"><span style="color:#4B5059;-webkit-text-stroke:0.35px #4B5059;">13</span></div>
<div style="left:991.10px;top:755.00px;font-family:'Liberation Mono',monospace;font-size:30px;line-height:46px;letter-spacing:-1.153px;white-space:pre;"><span style="color:#4B5059;-webkit-text-stroke:0.35px #4B5059;">14</span></div>
<div style="left:991.10px;top:801.00px;font-family:'Liberation Mono',monospace;font-size:30px;line-height:46px;letter-spacing:-1.153px;white-space:pre;"><span style="color:#4B5059;-webkit-text-stroke:0.35px #4B5059;">15</span></div>
<div style="left:991.10px;top:847.00px;font-family:'Liberation Mono',monospace;font-size:30px;line-height:46px;letter-spacing:-1.153px;white-space:pre;"><span style="color:#A1A3AB;-webkit-text-stroke:0.35px #A1A3AB;">16</span></div>
<div style="left:1137.20px;top:129.00px;font-family:'Liberation Mono',monospace;font-size:30px;line-height:46px;letter-spacing:-1.153px;white-space:pre;"><span style="color:#CF8E6D;-webkit-text-stroke:0.35px #CF8E6D;">package</span><span style="color:#BCBEC4;-webkit-text-stroke:0.35px #BCBEC4;"> com.qwesec;</span></div>
<div style="left:1137.20px;top:221.00px;font-family:'Liberation Mono',monospace;font-size:30px;line-height:46px;letter-spacing:-1.153px;white-space:pre;"><span style="color:#CF8E6D;-webkit-text-stroke:0.35px #CF8E6D;">import</span><span style="color:#BCBEC4;-webkit-text-stroke:0.35px #BCBEC4;"> java.io.IOException;</span></div>
<div style="left:1137.20px;top:313.00px;font-family:'Liberation Mono',monospace;font-size:30px;line-height:46px;letter-spacing:-1.153px;white-space:pre;"><span style="color:#5F826B;-webkit-text-stroke:0.35px #5F826B;font-style:italic;">/**</span></div>
<div style="left:1137.20px;top:359.00px;font-family:'Liberation Mono',monospace;font-size:30px;line-height:46px;letter-spacing:-1.153px;white-space:pre;"><span style="color:#5F826B;-webkit-text-stroke:0.35px #5F826B;font-style:italic;"> * </span><span style="color:#67A37C;-webkit-text-stroke:0.35px #67A37C;font-style:italic;">@author:</span><span style="color:#5F826B;-webkit-text-stroke:0.35px #5F826B;font-style:italic;"> x1ongsec</span></div>
<div style="left:1137.20px;top:405.00px;font-family:'Liberation Mono',monospace;font-size:30px;line-height:46px;letter-spacing:-1.153px;white-space:pre;"><span style="color:#5F826B;-webkit-text-stroke:0.35px #5F826B;font-style:italic;"> * </span><span style="color:#67A37C;-webkit-text-stroke:0.35px #67A37C;font-style:italic;">@date:</span><span style="color:#5F826B;-webkit-text-stroke:0.35px #5F826B;font-style:italic;"> 2025-11-07 16:21</span></div>
<div style="left:1137.20px;top:451.00px;font-family:'Liberation Mono',monospace;font-size:30px;line-height:46px;letter-spacing:-1.153px;white-space:pre;"><span style="color:#5F826B;-webkit-text-stroke:0.35px #5F826B;font-style:italic;"> * </span><span style="color:#67A37C;-webkit-text-stroke:0.35px #67A37C;font-style:italic;">@blog:</span><span style="color:#5F826B;-webkit-text-stroke:0.35px #5F826B;font-style:italic;"> www.qwesec.com</span></div>
<div style="left:1137.20px;top:497.00px;font-family:'Liberation Mono',monospace;font-size:30px;line-height:46px;letter-spacing:-1.153px;white-space:pre;"><span style="color:#5F826B;-webkit-text-stroke:0.35px #5F826B;font-style:italic;"> **/</span></div>
<div style="left:1137.20px;top:589.00px;font-family:'Liberation Mono',monospace;font-size:30px;line-height:46px;letter-spacing:-1.153px;white-space:pre;"><span style="color:#CF8E6D;-webkit-text-stroke:0.35px #CF8E6D;">public class</span><span style="color:#BCBEC4;-webkit-text-stroke:0.35px #BCBEC4;"> ExecCmd {</span></div>
<div style="left:1137.20px;top:663.00px;font-family:'Liberation Mono',monospace;font-size:30px;line-height:46px;letter-spacing:-1.153px;white-space:pre;"><span style="color:#CF8E6D;-webkit-text-stroke:0.35px #CF8E6D;">    public static void </span><span style="color:#56A8F5;-webkit-text-stroke:0.35px #56A8F5;">main</span><span style="color:#BCBEC4;-webkit-text-stroke:0.35px #BCBEC4;">(String[] args) </span><span style="color:#CF8E6D;-webkit-text-stroke:0.35px #CF8E6D;">throws</span><span style="color:#BCBEC4;-webkit-text-stroke:0.35px #BCBEC4;"> IOException {</span></div>
<div style="left:1137.20px;top:755.00px;font-family:'Liberation Mono',monospace;font-size:30px;line-height:46px;letter-spacing:-1.153px;white-space:pre;"><span style="color:#BCBEC4;-webkit-text-stroke:0.35px #BCBEC4;">    }</span></div>
<div style="left:1137.20px;top:801.00px;font-family:'Liberation Mono',monospace;font-size:30px;line-height:46px;letter-spacing:-1.153px;white-space:pre;"><span style="color:#BCBEC4;-webkit-text-stroke:0.35px #BCBEC4;">}</span></div>
<div style="left:1137.20px;top:709.00px;font-family:'Liberation Mono',monospace;font-size:30px;line-height:46px;letter-spacing:-1.153px;white-space:pre;"><span style="color:#BCBEC4;-webkit-text-stroke:0.35px #BCBEC4;">        Runtime.</span><span style="color:#BCBEC4;-webkit-text-stroke:0.35px #BCBEC4;font-style:italic;">getRuntime</span><span style="color:#BCBEC4;-webkit-text-stroke:0.35px #BCBEC4;">().exec(</span></div>
<div style="left:1714px;top:712.4px;width:147.6px;height:37.4px;background:#2F3136;border-radius:7px;"></div>
<div style="left:1723.92px;top:712.20px;font-family:'Liberation Sans', sans-serif;font-size:27px;line-height:36px;color:#858991;white-space:pre;letter-spacing:0.403px;-webkit-text-stroke:0.22px #858991;">command:</div>
<div style="left:1866.80px;top:709.00px;font-family:'Liberation Mono',monospace;font-size:30px;line-height:46px;letter-spacing:-1.153px;white-space:pre;"><span style="color:#6AAB73;-webkit-text-stroke:0.35px #6AAB73;">"Open -a Calculator"</span><span style="color:#BCBEC4;-webkit-text-stroke:0.35px #BCBEC4;">);</span></div>
<svg style="left:1188.25px;top:392.2px;" width="135" height="6.0" viewBox="0 0 135 6.0" fill="none"><path d="M0 5.0 L4.20 1.00 L8.39 5.00 L12.59 1.00 L16.79 5.00 L20.98 1.00 L25.18 5.00 L29.38 1.00 L33.58 5.00 L37.77 1.00 L41.97 5.00 L46.17 1.00 L50.36 5.00 L54.56 1.00 L58.76 5.00 L62.95 1.00 L67.15 5.00 L71.35 1.00 L75.54 5.00 L79.74 1.00 L83.94 5.00 L88.13 1.00 L92.33 5.00 L96.53 1.00 L100.73 5.00 L104.92 1.00 L109.12 5.00 L113.32 1.00 L117.51 5.00 L121.71 1.00 L125.91 5.00 L130.10 1.00 L134.30 5.00" stroke="#C29E4A" stroke-width="1.6" fill="none"/></svg>
<svg style="left:1188.25px;top:438.2px;" width="102" height="6.0" viewBox="0 0 102 6.0" fill="none"><path d="M0 5.0 L4.19 1.00 L8.38 5.00 L12.58 1.00 L16.77 5.00 L20.96 1.00 L25.15 5.00 L29.34 1.00 L33.53 5.00 L37.73 1.00 L41.92 5.00 L46.11 1.00 L50.30 5.00 L54.49 1.00 L58.68 5.00 L62.88 1.00 L67.07 5.00 L71.26 1.00 L75.45 5.00 L79.64 1.00 L83.83 5.00 L88.03 1.00 L92.22 5.00 L96.41 1.00 L100.60 5.00" stroke="#C29E4A" stroke-width="1.6" fill="none"/></svg>
<svg style="left:1188.25px;top:484.2px;" width="102" height="6.0" viewBox="0 0 102 6.0" fill="none"><path d="M0 5.0 L4.19 1.00 L8.38 5.00 L12.58 1.00 L16.77 5.00 L20.96 1.00 L25.15 5.00 L29.34 1.00 L33.53 5.00 L37.73 1.00 L41.92 5.00 L46.11 1.00 L50.30 5.00 L54.49 1.00 L58.68 5.00 L62.88 1.00 L67.07 5.00 L71.26 1.00 L75.45 5.00 L79.64 1.00 L83.83 5.00 L88.03 1.00 L92.22 5.00 L96.41 1.00 L100.60 5.00" stroke="#C29E4A" stroke-width="1.6" fill="none"/></svg>
<svg style="left:1374.1000000000001px;top:392.2px;" width="101" height="6.0" viewBox="0 0 101 6.0" fill="none"><path d="M0 5.0 L4.17 1.00 L8.34 5.00 L12.51 1.00 L16.68 5.00 L20.85 1.00 L25.02 5.00 L29.20 1.00 L33.37 5.00 L37.54 1.00 L41.71 5.00 L45.88 1.00 L50.05 5.00 L54.22 1.00 L58.39 5.00 L62.56 1.00 L66.73 5.00 L70.90 1.00 L75.07 5.00 L79.25 1.00 L83.42 5.00 L87.59 1.00 L91.76 5.00 L95.93 1.00 L100.10 5.00" stroke="#549159" stroke-width="1.6" fill="none"/></svg>
<svg style="left:1374.1000000000001px;top:484.2px;" width="101" height="6.0" viewBox="0 0 101 6.0" fill="none"><path d="M0 5.0 L4.17 1.00 L8.34 5.00 L12.51 1.00 L16.68 5.00 L20.85 1.00 L25.02 5.00 L29.20 1.00 L33.37 5.00 L37.54 1.00 L41.71 5.00 L45.88 1.00 L50.05 5.00 L54.22 1.00 L58.39 5.00 L62.56 1.00 L66.73 5.00 L70.90 1.00 L75.07 5.00 L79.25 1.00 L83.42 5.00 L87.59 1.00 L91.76 5.00 L95.93 1.00 L100.10 5.00" stroke="#549159" stroke-width="1.6" fill="none"/></svg>
<div style="left:1200.6px;top:708px;width:1.4px;height:46px;background:#313438;"></div>
<svg style="left:1044px;top:594px;" width="36" height="34" viewBox="0 0 36 34" fill="none"><path d="M6.6 4.4 V29.6 L28.6 17 Z" fill="#253627" stroke="#57965C" stroke-width="2.2" stroke-linejoin="round"/></svg>
<svg style="left:1044px;top:668px;" width="36" height="34" viewBox="0 0 36 34" fill="none"><path d="M6.6 4.4 V29.6 L28.6 17 Z" fill="#253627" stroke="#57965C" stroke-width="2.2" stroke-linejoin="round"/></svg>
<svg style="left:1202.2464396284831px;top:636.046439628483px;" width="23.91" height="23.91" viewBox="0 0 23.91 23.91" fill="none"><polygon points="8.31,0.36 12.59,0.36 13.98,2.93 20.55,2.93 22.15,6.12 20.65,9.20 23.81,14.59 21.67,18.30 18.75,18.22 15.47,23.91 11.91,23.70 9.99,20.86 3.74,20.91 1.60,17.20 3.13,14.71 -0.16,9.02 1.81,6.04 5.22,5.80" fill="#A7A9AD"/><polygon points="8.37,1.25 10.40,3.67 8.97,6.46 20.39,6.46 19.46,8.85 7.85,8.85 5.93,6.18" fill="#1E1F22"/><polygon points="23.02,14.20 19.90,14.75 18.20,12.11 12.49,22.01 10.89,20.01 16.70,9.96 19.97,9.62" fill="#1E1F22"/><polygon points="4.47,20.41 5.56,17.44 8.69,17.28 2.98,7.39 5.51,7.01 11.31,17.06 9.97,20.06" fill="#1E1F22"/></svg>
<svg style="left:1230.7px;top:643.6px;" width="15" height="9.6" viewBox="0 0 15 9.6" fill="none"><path d="M2 2 L7.5 7.6 L13 2" stroke="#B4B8BF" stroke-width="1.8" stroke-linecap="round" stroke-linejoin="round"/></svg>
<svg style="left:2756px;top:140px;" width="28" height="26" viewBox="0 0 28 26" fill="none"><path d="M14 3.2 L25 22.2 Q25.6 23.6 24 23.6 H4 Q2.4 23.6 3 22.2 Z" fill="#D6AE58" stroke="#D6AE58" stroke-width="2.4" stroke-linejoin="round"/><path d="M14 8.8 V16" stroke="#1E1F22" stroke-width="2.6" stroke-linecap="round"/><circle cx="14" cy="20" r="1.7" fill="#1E1F22"/></svg>
<div style="left:2788.16px;top:138.70px;font-family:'Liberation Sans', sans-serif;font-size:24px;line-height:32px;color:#CED0D6;white-space:pre;-webkit-text-stroke:0.22px #CED0D6;">3</div>
<svg style="left:2815px;top:140px;" width="30" height="30" viewBox="0 0 30 30" fill="none"><path d="M4.4 11.6 L10.8 18 L24.6 4.4" stroke="#57965C" stroke-width="3.4" stroke-linecap="round" stroke-linejoin="round"/><path d="M3.6 26.6 L7.8 23.2 L11.4 26.6 L15.2 23.2 L18.8 26.6 L24 22.6" stroke="#57965C" stroke-width="1.8" fill="none"/></svg>
<div style="left:2848.00px;top:138.70px;font-family:'Liberation Sans', sans-serif;font-size:24px;line-height:32px;color:#CED0D6;white-space:pre;-webkit-text-stroke:0.22px #CED0D6;">2</div>
<svg style="left:2882.5px;top:147.8px;" width="19" height="12" viewBox="0 0 19 12" fill="none"><path d="M2 10 L9.5 2 L17 10" stroke="#CED0D6" stroke-width="2" stroke-linecap="round" stroke-linejoin="round"/></svg>
<svg style="left:2924.5px;top:147.8px;" width="19" height="12" viewBox="0 0 19 12" fill="none"><path d="M2 2 L9.5 10 L17 2" stroke="#CED0D6" stroke-width="2" stroke-linecap="round" stroke-linejoin="round"/></svg>
<div style="left:2930px;top:409.5px;width:28px;height:4px;background:#BE9B44;"></div>
<div style="left:2930px;top:455.6px;width:28px;height:4px;background:#BE9B44;"></div>
<div style="left:2930px;top:501.4px;width:28px;height:4px;background:#BE9B44;"></div>
<div style="left:2958px;top:66px;width:2px;height:1624px;background:#1E1F22;"></div>
<svg style="left:2976px;top:82px;" width="32" height="32" viewBox="0 0 32 32" fill="none"><g stroke="#CED0D6" stroke-width="2.2" stroke-linecap="round" stroke-linejoin="round" fill="none"><path d="M16 4 C10.4 4 8.2 8.4 8.2 12.6 V18.4 L4.6 23.8 H27.4 L23.8 18.4 V12.6 C23.8 8.4 21.6 4 16 4 Z"/><path d="M12.6 27.4 C13.4 29 18.6 29 19.4 27.4"/></g></svg>
<div style="left:2994.6px;top:80.4px;width:14.8px;height:14.8px;background:#2B2D30;border-radius:7.4px;"></div>
<div style="left:2996.4px;top:82.2px;width:11.2px;height:11.2px;background:#DB5C5C;border-radius:5.6px;"></div>
<svg style="left:2975px;top:147px;" width="36" height="34" viewBox="0 0 36 34" fill="none"><g stroke="#CED0D6" stroke-width="2.1" stroke-linecap="round" stroke-linejoin="round" fill="none"><path d="M7.2 5.4 C10 4.2 13.5 3.6 17.6 3.6 C23 3.6 27.4 7 28.7 12.3"/><path d="M22.9 10.4 C20.5 8.8 17 8.2 14.5 8.5 C9 9.2 5.6 12.5 5.6 16.6 C5.6 21.6 9.6 25.4 15 26.3"/><path d="M17.6 14.3 C14.5 13.2 11.8 14.4 11.8 16.8 C11.8 18.8 13 20.2 14.8 20.6"/><path d="M20 16.3 H30.2 Q32.7 16.3 32.7 18.8 V30 L28 26.3 H20 Q17.6 26.3 17.6 23.8 V18.8 Q17.6 16.3 20 16.3 Z" fill="#2B2D30"/></g></svg>
<svg style="left:2976px;top:209px;" width="32" height="34" viewBox="0 0 32 34" fill="none"><g stroke="#CED0D6" stroke-width="2.1" fill="none"><ellipse cx="16" cy="7.6" rx="10.8" ry="4.2"/><path d="M5.2 7.6 V26.4 C5.2 28.8 10 30.8 16 30.8 C22 30.8 26.8 28.8 26.8 26.4 V7.6"/><path d="M5.2 13.9 C5.2 16.3 10 18.3 16 18.3 C22 18.3 26.8 16.3 26.8 13.9"/><path d="M5.2 20.2 C5.2 22.6 10 24.6 16 24.6 C22 24.6 26.8 22.6 26.8 20.2"/></g></svg>
<svg style="left:2975.5px;top:273.5px;" width="33.0" height="33.0" viewBox="0 0 33.0 33.0" fill="none"><polygon points="11.47,0.50 17.38,0.50 19.30,4.05 28.37,4.05 30.57,8.45 28.50,12.70 32.87,20.14 29.92,25.26 25.88,25.15 21.35,33.00 16.44,32.71 13.79,28.79 5.16,28.86 2.20,23.74 4.32,20.30 -0.22,12.45 2.49,8.34 7.21,8.01" fill="#CDCDCD"/><polygon points="11.55,1.72 14.36,5.07 12.38,8.92 28.15,8.92 26.86,12.21 10.84,12.21 8.18,8.53" fill="#2B2D30"/><polygon points="31.77,19.60 27.47,20.36 25.12,16.72 17.24,30.38 15.04,27.62 23.05,13.74 27.56,13.28" fill="#2B2D30"/><polygon points="6.18,28.18 7.67,24.07 12.00,23.86 4.11,10.20 7.60,9.67 15.61,23.55 13.76,27.69" fill="#2B2D30"/></svg>
<svg style="left:2976px;top:336px;" width="32" height="36" viewBox="0 0 32 36" fill="none"><circle cx="16" cy="14.6" r="10.6" stroke="#2F8EF0" stroke-width="3.6" fill="none"/><path d="M4.4 27.6 L16 32.4 L27.6 27.6 L27.6 30.6 L16 35.2 L4.4 30.6 Z" fill="#2F8EF0" transform="translate(0,-1.6)"/></svg>
<div style="left:2968px;top:396px;width:48px;height:2px;background:#43454A;"></div>
<svg style="left:2976px;top:422px;" width="32" height="36" viewBox="0 0 32 36" fill="none"><g stroke="#CED0D6" stroke-width="2.2" stroke-linejoin="round" stroke-linecap="round" fill="none"><path d="M28.6 3.2 H8.4 C5.8 3.2 4 5 4 7.4 V29.6 C4 31.8 5.6 33.2 7.8 33.2 H28.6 V8 H8.2"/><path d="M11.4 26.2 L16.4 13.6 L21.4 26.2 M13.2 22.2 H19.6"/></g></svg>
<div style="left:66px;top:1290.6px;width:2892px;height:1.6px;background:#1E1F22;"></div>
<div style="left:66px;top:1353.8px;width:2892px;height:1.8px;background:#1E1F22;"></div>
<div style="left:130px;top:1355.6px;width:2772px;height:335px;background:#1E1F22;"></div>
<div style="left:89.01px;top:1245.10px;font-family:'Liberation Sans', sans-serif;font-size:24.5px;line-height:32px;color:#DFE1E5;white-space:pre;letter-spacing:0.605px;font-weight:700;">Run</div>
<svg style="left:194px;top:1248px;" width="28" height="24" viewBox="0 0 28 24" fill="none"><rect x="1.2" y="1.2" width="25.6" height="21.6" rx="4" fill="#25324D" stroke="#4A6FB8" stroke-width="2.2"/><path d="M6 7.5 H9.5 M12 7.5 H15.5" stroke="#548AF7" stroke-width="2"/></svg>
<div style="left:231.00px;top:1244.10px;font-family:'Liberation Sans', sans-serif;font-size:25px;line-height:33px;color:#DFE1E5;white-space:pre;letter-spacing:-0.013px;-webkit-text-stroke:0.22px #DFE1E5;">ExecCmd</div>
<svg style="left:361px;top:1252.6px;" width="18" height="18" viewBox="0 0 18 18" fill="none"><path d="M3 3 L15 15 M15 3 L3 15" stroke="#A1A4AB" stroke-width="2" stroke-linecap="round"/></svg>
<div style="left:168.3px;top:1286px;width:231px;height:6px;background:#55585E;border-radius:3px;"></div>
<div style="left:2861.4px;top:1246.9px;width:4.6px;height:4.6px;background:#CED0D6;border-radius:2.3px;"></div>
<div style="left:2861.4px;top:1257.7px;width:4.6px;height:4.6px;background:#CED0D6;border-radius:2.3px;"></div>
<div style="left:2861.4px;top:1268.5px;width:4.6px;height:4.6px;background:#CED0D6;border-radius:2.3px;"></div>
<div style="left:2903px;top:1259px;width:25.4px;height:2.2px;background:#CED0D6;"></div>
<svg style="left:84px;top:1306px;" width="36" height="36" viewBox="0 0 36 36" fill="none"><path d="M16 29.7 A11.5 11.5 0 1 1 26.2 13" stroke="#CED0D6" stroke-width="2.2" stroke-linecap="round" fill="none"/><path d="M18.4 13.8 H28.2 V4.8" stroke="#CED0D6" stroke-width="2.2" stroke-linecap="round" stroke-linejoin="round" fill="none"/><path d="M18.6 18.8 V33.4 L31.7 26 Z" stroke="#2B2D30" stroke-width="6" stroke-linejoin="round" fill="#2B2D30"/><path d="M18.6 18.8 V33.4 L31.7 26 Z" stroke="#57965C" stroke-width="2.2" stroke-linejoin="round" fill="#253627"/></svg>
<div style="left:140.2px;top:1312px;width:23.8px;height:23.8px;background:#5C5D5F;border-radius:4.5px;"></div>
<div style="left:184.2px;top:1304.2px;width:1.6px;height:39.6px;background:#43454A;"></div>
<svg style="left:202px;top:1308px;" width="32" height="32" viewBox="0 0 32 32" fill="none"><g stroke="#5A5C60" stroke-width="2.2" stroke-linejoin="round" fill="none"><path d="M3 10.8 Q3 7.6 6.2 7.6 H9.6 L11.8 4.4 H20.2 L22.4 7.6 H25.8 Q29 7.6 29 10.8 V24 Q29 27.2 25.8 27.2 H6.2 Q3 27.2 3 24 Z"/><circle cx="16" cy="17" r="5.2"/></g><circle cx="24.6" cy="12" r="1.2" fill="#5A5C60"/></svg>
<svg style="left:256px;top:1308px;" width="32" height="32" viewBox="0 0 32 32" fill="none"><g stroke="#5A5C60" stroke-width="2.2" stroke-linejoin="round" stroke-linecap="round" fill="none"><path d="M6.6 10.4 V6.2 Q6.6 3 9.8 3 H24 Q27.2 3 27.2 6.2 V25.8 Q27.2 29 24 29 H9.8 Q6.6 29 6.6 25.8 V21.6"/><path d="M2.4 16 H19.6 M13.6 9.8 L19.8 16 L13.6 22.2"/></g></svg>
<svg style="left:304px;top:1308px;" width="40" height="38" viewBox="0 0 40 38" fill="none"><g stroke="#5A5C60" stroke-width="2.2" stroke-linejoin="round" stroke-linecap="round" fill="none"><path d="M5.4 27.4 Q3.2 24.4 3.2 20.2 A14.6 14.6 0 0 1 32.4 20.2 Q32.4 24.4 30.2 27.4 Z"/><circle cx="17.6" cy="21" r="2.6"/><path d="M19.6 19 L25.6 13.6"/></g><path d="M37 28 V36 H29 Z" fill="#5A5C60"/></svg>
<div style="left:371.6px;top:1311.9px;width:4.6px;height:4.6px;background:#CED0D6;border-radius:2.3px;"></div>
<div style="left:371.6px;top:1321.8px;width:4.6px;height:4.6px;background:#CED0D6;border-radius:2.3px;"></div>
<div style="left:371.6px;top:1331.7px;width:4.6px;height:4.6px;background:#CED0D6;border-radius:2.3px;"></div>
<svg style="left:82px;top:1372px;" width="34" height="32" viewBox="0 0 34 32" fill="none"><path d="M13.6 17.2 L25.8 4 L30.4 8.2 L18.2 21.4 Z" fill="#A9ABAD"/><path d="M13.6 17.2 L16.6 14 L21.2 18.2 L18.2 21.4 L9.8 21.4 Z" fill="#D25252"/><rect x="3.4" y="22.2" width="25.8" height="6" fill="#D25252"/></svg>
<svg style="left:84px;top:1422px;" width="28" height="32" viewBox="0 0 28 32" fill="none"><path d="M14 28 V6 M4.8 14.6 L14 5.4 L23.2 14.6" stroke="#D0503F" stroke-width="4" fill="none"/></svg>
<svg style="left:84px;top:1474px;" width="28" height="32" viewBox="0 0 28 32" fill="none"><path d="M14 4 V26 M4.8 17.4 L14 26.6 L23.2 17.4" stroke="#D0503F" stroke-width="4" fill="none"/></svg>
<svg style="left:82px;top:1526px;" width="34" height="32" viewBox="0 0 34 32" fill="none"><g stroke="#CED0D6" stroke-width="2.1" stroke-linecap="round" stroke-linejoin="round" fill="none"><path d="M8.6 4.6 V26.4 M2.6 20.2 L8.6 26.4 L14.6 20.2"/><rect x="20.2" y="5" width="8.4" height="6.4" rx="1.4"/><rect x="20.2" y="15.6" width="8.4" height="6.4" rx="1.4"/></g></svg>
<svg style="left:84px;top:1578px;" width="28" height="32" viewBox="0 0 28 32" fill="none"><path d="M14 26.6 V6 M5.4 14.2 L14 5.6 L22.6 14.2" stroke="#5A5C60" stroke-width="2.1" stroke-linecap="round" stroke-linejoin="round" fill="none"/></svg>
<svg style="left:92.0px;top:1658.25px;" width="12" height="19.5" viewBox="0 0 12 19.5" fill="none"><path d="M2 2 L10 9.75 L2 17.5" stroke="#CED0D6" stroke-width="2" stroke-linecap="round" stroke-linejoin="round"/></svg>
<div style="left:154px;top:1356px;width:1213px;height:46px;background:#3A3C42;"></div>
<div style="left:154.20px;top:1357.40px;font-family:'Liberation Mono',monospace;font-size:30px;line-height:46px;letter-spacing:-1.153px;white-space:pre;"><span style="color:#868A91;-webkit-text-stroke:0.35px #868A91;">/Library/Java/JavaVirtualMachines/jdk-1.8.jdk/Contents/Home/bin/java ...</span></div>
<div style="left:154.20px;top:1449.40px;font-family:'Liberation Mono',monospace;font-size:30px;line-height:46px;letter-spacing:-1.153px;white-space:pre;"><span style="color:#BCBEC4;-webkit-text-stroke:0.35px #BCBEC4;">Process finished with exit code 0</span></div>
<svg style="left:2921.0px;top:1378.75px;" width="12" height="19.5" viewBox="0 0 12 19.5" fill="none"><path d="M10 2 L2 9.75 L10 17.5" stroke="#CED0D6" stroke-width="2" stroke-linecap="round" stroke-linejoin="round"/></svg>
<div style="left:2849px;top:1476.5px;width:160px;height:32px;transform:rotate(90deg);transform-origin:center center;font-size:23.5px;line-height:32px;color:#DFE1E5;text-align:center;letter-spacing:-0.1px;white-space:pre;">Performance</div>
<div style="left:0px;top:1690px;width:3024px;height:2px;background:#1E1F22;"></div>
<div style="left:28px;top:1708px;width:11.6px;height:11.6px;border:2.2px solid #548AF7;border-radius:4px;background:#25324D;"></div>
<div style="left:52.62px;top:1697.80px;font-family:'Liberation Sans', sans-serif;font-size:25px;line-height:33px;color:#A8ADB5;white-space:pre;letter-spacing:0.532px;-webkit-text-stroke:0.22px #A8ADB5;">java-reflect</div>
<div style="left:229.88px;top:1697.80px;font-family:'Liberation Sans', sans-serif;font-size:25px;line-height:33px;color:#A8ADB5;white-space:pre;letter-spacing:0.488px;-webkit-text-stroke:0.22px #A8ADB5;">src</div>
<div style="left:313.00px;top:1697.80px;font-family:'Liberation Sans', sans-serif;font-size:25px;line-height:33px;color:#A8ADB5;white-space:pre;letter-spacing:1.438px;-webkit-text-stroke:0.22px #A8ADB5;">com</div>
<div style="left:411.60px;top:1697.80px;font-family:'Liberation Sans', sans-serif;font-size:25px;line-height:33px;color:#A8ADB5;white-space:pre;letter-spacing:0.435px;-webkit-text-stroke:0.22px #A8ADB5;">qwesec</div>
<svg style="left:200.5px;top:1705.7px;" width="11" height="17.4" viewBox="0 0 11 17.4" fill="none"><path d="M2 2 L9 8.7 L2 15.4" stroke="#9DA0A8" stroke-width="2" stroke-linecap="round" stroke-linejoin="round"/></svg>
<svg style="left:284.1px;top:1705.7px;" width="11" height="17.4" viewBox="0 0 11 17.4" fill="none"><path d="M2 2 L9 8.7 L2 15.4" stroke="#9DA0A8" stroke-width="2" stroke-linecap="round" stroke-linejoin="round"/></svg>
<svg style="left:382.1px;top:1705.7px;" width="11" height="17.4" viewBox="0 0 11 17.4" fill="none"><path d="M2 2 L9 8.7 L2 15.4" stroke="#9DA0A8" stroke-width="2" stroke-linecap="round" stroke-linejoin="round"/></svg>
<svg style="left:517.9px;top:1705.7px;" width="11" height="17.4" viewBox="0 0 11 17.4" fill="none"><path d="M2 2 L9 8.7 L2 15.4" stroke="#9DA0A8" stroke-width="2" stroke-linecap="round" stroke-linejoin="round"/></svg>
<svg style="left:548.0px;top:1696.8px;" width="36.0" height="36.0" viewBox="0 0 36 36" fill="none"><circle cx="16" cy="18" r="12.9" fill="#25324D" stroke="#548AF7" stroke-width="2.2"/><path d="M20.7 14.2 A6.1 6.1 0 1 0 20.7 21.8" stroke="#548AF7" stroke-width="2.2" stroke-linecap="round" fill="none"/><path d="M19 3.6 V16 L30.4 9.8 Z" stroke="#2B2D30" stroke-width="5.6" stroke-linejoin="round" fill="#2B2D30"/><path d="M19 3.6 V16 L30.4 9.8 Z" stroke="#57965C" stroke-width="2.1" stroke-linejoin="round" fill="#253627"/></svg>
<div style="left:586.80px;top:1697.80px;font-family:'Liberation Sans', sans-serif;font-size:25px;line-height:33px;color:#A8ADB5;white-space:pre;letter-spacing:-0.013px;-webkit-text-stroke:0.22px #A8ADB5;">ExecCmd</div>
<div style="left:2442.12px;top:1697.80px;font-family:'Liberation Sans', sans-serif;font-size:25px;line-height:33px;color:#A8ADB5;white-space:pre;letter-spacing:-0.375px;-webkit-text-stroke:0.22px #A8ADB5;">16:1</div>
<svg style="left:2519.653250773994px;top:1697.6532507739937px;" width="32.69" height="32.69" viewBox="0 0 32.69 32.69" fill="none"><defs><linearGradient id="lg1" x1="0" y1="0" x2="0.3" y2="1"><stop offset="0" stop-color="#8478F2"/><stop offset="1" stop-color="#5B34E0"/></linearGradient></defs><polygon points="11.36,0.50 17.22,0.50 19.12,4.01 28.11,4.01 30.29,8.37 28.24,12.58 32.57,19.96 29.64,25.03 25.64,24.92 21.15,32.70 16.28,32.41 13.66,28.52 5.11,28.59 2.18,23.52 4.28,20.11 -0.22,12.33 2.47,8.26 7.14,7.93" fill="url(#lg1)"/><polygon points="11.44,1.70 14.23,5.02 12.27,8.84 27.89,8.84 26.61,12.10 10.74,12.10 8.10,8.45" fill="#F2F1F8"/><polygon points="31.48,19.42 27.21,20.17 24.89,16.57 17.08,30.10 14.90,27.36 22.83,13.62 27.31,13.16" fill="#F2F1F8"/><polygon points="6.12,27.92 7.60,23.84 11.88,23.64 4.07,10.11 7.53,9.58 15.47,23.33 13.63,27.43" fill="#F2F1F8"/></svg>
<div style="left:2591.51px;top:1684.80px;font-family:'Liberation Sans', sans-serif;font-size:38px;line-height:50px;color:#F5001A;white-space:pre;font-weight:700;font-style:italic;-webkit-text-stroke:1px #F5001A;">y</div>
<div style="left:2646.50px;top:1697.80px;font-family:'Liberation Sans', sans-serif;font-size:25px;line-height:33px;color:#A8ADB5;white-space:pre;letter-spacing:0.375px;-webkit-text-stroke:0.22px #A8ADB5;">LF</div>
<div style="left:2706.53px;top:1697.80px;font-family:'Liberation Sans', sans-serif;font-size:25px;line-height:33px;color:#A8ADB5;white-space:pre;letter-spacing:1.031px;-webkit-text-stroke:0.22px #A8ADB5;">UTF-8</div>
<div style="left:2821.50px;top:1697.80px;font-family:'Liberation Sans', sans-serif;font-size:25px;line-height:33px;color:#A8ADB5;white-space:pre;letter-spacing:0.436px;-webkit-text-stroke:0.22px #A8ADB5;">4 spaces</div>
<svg style="left:2958px;top:1696px;" width="34" height="34" viewBox="0 0 34 34" fill="none"><g stroke="#CED0D6" stroke-width="2.2" stroke-linecap="round" stroke-linejoin="round" fill="none"><rect x="5.2" y="15.2" width="17.8" height="14" rx="3.6"/><path d="M18.9 14.8 V10.8 A5.1 5.1 0 0 1 29.1 10.8 V15.4 M14 19.4 V25"/></g></svg>
</div>
<div style="left:0;top:0;width:3020px;height:1736px;border-radius:22px;border:2px solid rgba(255,255,255,0.2);border-top-color:rgba(255,255,255,0);pointer-events:none;"></div>
<div style="left:2282px;top:732px;width:396px;height:700px;border-radius:24px;background:#28282A;box-shadow:0 0 0 1.5px rgba(0,0,0,0.55), 0 36px 90px 10px rgba(0,0,0,0.55), 0 10px 30px rgba(0,0,0,0.35);"></div>
<div style="left:2282px;top:732px;width:393px;height:697px;border-radius:24px;border:1.5px solid rgba(255,255,255,0.24);"></div>
<div style="left:2308px;top:758px;width:24px;height:24px;background:#FF5F57;border-radius:12px;"></div>
<div style="left:2348px;top:758px;width:24px;height:24px;background:#FEBC2E;border-radius:12px;"></div>
<div style="left:2388px;top:758px;width:24px;height:24px;background:#4A4A4C;border-radius:12px;"></div>
<div style="left:2623.68px;top:876.60px;font-family:'Liberation Sans', sans-serif;font-size:61px;line-height:80px;color:#EDEDED;white-space:pre;-webkit-text-stroke:0.5px #28282A;transform:scaleX(1.11);transform-origin:right center;">0</div>
<div style="left:2302px;top:966px;width:80px;height:80px;background:#6F6F71;border-radius:40px;"></div>
<div style="left:2321.80px;top:986.00px;font-family:'Liberation Sans', sans-serif;font-size:32px;line-height:42px;color:#F2F2F2;white-space:pre;letter-spacing:-2.800px;-webkit-text-stroke:0.5px #F2F2F2;">AC</div>
<div style="left:2394px;top:966px;width:80px;height:80px;background:#6F6F71;border-radius:40px;"></div>
<svg style="left:2416px;top:988px;" width="36" height="36" viewBox="0 0 36 36" fill="none"><g stroke="#F2F2F2" stroke-width="2.2" stroke-linecap="round"><path d="M23.4 6.4 L12 30.4 M5.6 12.6 H14 M9.8 8.4 V16.8 M22.4 26.4 H30"/></g></svg>
<div style="left:2486px;top:966px;width:80px;height:80px;background:#6F6F71;border-radius:40px;"></div>
<div style="left:2511.28px;top:986.20px;font-family:'Liberation Sans', sans-serif;font-size:32px;line-height:42px;color:#F2F2F2;white-space:pre;-webkit-text-stroke:0.22px #F2F2F2;">%</div>
<div style="left:2578px;top:966px;width:80px;height:80px;background:#FF9508;border-radius:40px;"></div>
<svg style="left:2600px;top:988px;" width="36" height="36" viewBox="0 0 36 36" fill="none"><path d="M5.2 18 H30.8" stroke="#F2F2F2" stroke-width="2.6" stroke-linecap="round"/><circle cx="18" cy="8.4" r="2.5" fill="#F2F2F2"/><circle cx="18" cy="27.6" r="2.5" fill="#F2F2F2"/></svg>
<div style="left:2302px;top:1058px;width:80px;height:80px;background:#515153;border-radius:40px;"></div>
<div style="left:2331.64px;top:1074.20px;font-family:'Liberation Sans', sans-serif;font-size:37px;line-height:49px;color:#F2F2F2;white-space:pre;-webkit-text-stroke:0.3px #F2F2F2;">7</div>
<div style="left:2394px;top:1058px;width:80px;height:80px;background:#515153;border-radius:40px;"></div>
<div style="left:2423.73px;top:1074.20px;font-family:'Liberation Sans', sans-serif;font-size:37px;line-height:49px;color:#F2F2F2;white-space:pre;-webkit-text-stroke:0.3px #F2F2F2;">8</div>
<div style="left:2486px;top:1058px;width:80px;height:80px;background:#515153;border-radius:40px;"></div>
<div style="left:2515.73px;top:1074.20px;font-family:'Liberation Sans', sans-serif;font-size:37px;line-height:49px;color:#F2F2F2;white-space:pre;-webkit-text-stroke:0.3px #F2F2F2;">9</div>
<div style="left:2578px;top:1058px;width:80px;height:80px;background:#FF9508;border-radius:40px;"></div>
<svg style="left:2600px;top:1080px;" width="36" height="36" viewBox="0 0 36 36" fill="none"><path d="M8.4 8.4 L27.6 27.6 M27.6 8.4 L8.4 27.6" stroke="#F2F2F2" stroke-width="2.6" stroke-linecap="round"/></svg>
<div style="left:2302px;top:1150px;width:80px;height:80px;background:#515153;border-radius:40px;"></div>
<div style="left:2331.83px;top:1166.20px;font-family:'Liberation Sans', sans-serif;font-size:37px;line-height:49px;color:#F2F2F2;white-space:pre;-webkit-text-stroke:0.3px #F2F2F2;">4</div>
<div style="left:2394px;top:1150px;width:80px;height:80px;background:#515153;border-radius:40px;"></div>
<div style="left:2423.73px;top:1166.20px;font-family:'Liberation Sans', sans-serif;font-size:37px;line-height:49px;color:#F2F2F2;white-space:pre;-webkit-text-stroke:0.3px #F2F2F2;">5</div>
<div style="left:2486px;top:1150px;width:80px;height:80px;background:#515153;border-radius:40px;"></div>
<div style="left:2515.55px;top:1166.20px;font-family:'Liberation Sans', sans-serif;font-size:37px;line-height:49px;color:#F2F2F2;white-space:pre;-webkit-text-stroke:0.3px #F2F2F2;">6</div>
<div style="left:2578px;top:1150px;width:80px;height:80px;background:#FF9508;border-radius:40px;"></div>
<svg style="left:2600px;top:1172px;" width="36" height="36" viewBox="0 0 36 36" fill="none"><path d="M5.6 18 H30.4" stroke="#F2F2F2" stroke-width="2.6" stroke-linecap="round"/></svg>
<div style="left:2302px;top:1242px;width:80px;height:80px;background:#515153;border-radius:40px;"></div>
<div style="left:2331.18px;top:1258.20px;font-family:'Liberation Sans', sans-serif;font-size:37px;line-height:49px;color:#F2F2F2;white-space:pre;-webkit-text-stroke:0.3px #F2F2F2;">1</div>
<div style="left:2394px;top:1242px;width:80px;height:80px;background:#515153;border-radius:40px;"></div>
<div style="left:2423.64px;top:1258.20px;font-family:'Liberation Sans', sans-serif;font-size:37px;line-height:49px;color:#F2F2F2;white-space:pre;-webkit-text-stroke:0.3px #F2F2F2;">2</div>
<div style="left:2486px;top:1242px;width:80px;height:80px;background:#515153;border-radius:40px;"></div>
<div style="left:2515.82px;top:1258.20px;font-family:'Liberation Sans', sans-serif;font-size:37px;line-height:49px;color:#F2F2F2;white-space:pre;-webkit-text-stroke:0.3px #F2F2F2;">3</div>
<div style="left:2578px;top:1242px;width:80px;height:80px;background:#FF9508;border-radius:40px;"></div>
<svg style="left:2600px;top:1264px;" width="36" height="36" viewBox="0 0 36 36" fill="none"><path d="M5.6 19.4 H30.4 M18 7 V31.8" stroke="#F2F2F2" stroke-width="2.6" stroke-linecap="round"/></svg>
<div style="left:2302px;top:1334px;width:80px;height:80px;background:#515153;border-radius:40px;"></div>
<svg style="left:2327px;top:1357px;" width="30" height="36" viewBox="0 0 30 36" fill="none"><rect x="4.6" y="3.4" width="20.8" height="29.2" rx="4" stroke="#F2F2F2" stroke-width="2.4"/><rect x="8" y="6.8" width="14" height="6.6" rx="1.6" fill="#F2F2F2"/><circle cx="9.6" cy="17.6" r="1.75" fill="#F2F2F2"/><circle cx="9.6" cy="22.8" r="1.75" fill="#F2F2F2"/><circle cx="9.6" cy="28.0" r="1.75" fill="#F2F2F2"/><circle cx="15.0" cy="17.6" r="1.75" fill="#F2F2F2"/><circle cx="15.0" cy="22.8" r="1.75" fill="#F2F2F2"/><circle cx="15.0" cy="28.0" r="1.75" fill="#F2F2F2"/><circle cx="20.4" cy="17.6" r="1.75" fill="#F2F2F2"/><circle cx="20.4" cy="22.8" r="1.75" fill="#F2F2F2"/><circle cx="20.4" cy="28.0" r="1.75" fill="#F2F2F2"/></svg>
<div style="left:2394px;top:1334px;width:80px;height:80px;background:#515153;border-radius:40px;"></div>
<div style="left:2423.73px;top:1350.20px;font-family:'Liberation Sans', sans-serif;font-size:37px;line-height:49px;color:#F2F2F2;white-space:pre;-webkit-text-stroke:0.3px #F2F2F2;">0</div>
<div style="left:2486px;top:1334px;width:80px;height:80px;background:#515153;border-radius:40px;"></div>
<div style="left:2522.9px;top:1381.2px;width:6.2px;height:6.2px;background:#F2F2F2;border-radius:3.1px;"></div>
<div style="left:2578px;top:1334px;width:80px;height:80px;background:#FF9508;border-radius:40px;"></div>
<svg style="left:2600px;top:1356px;" width="36" height="36" viewBox="0 0 36 36" fill="none"><path d="M7.6 14.4 H28.4 M7.6 24 H28.4" stroke="#F2F2F2" stroke-width="2.6" stroke-linecap="round"/></svg>
</div></body></html>
